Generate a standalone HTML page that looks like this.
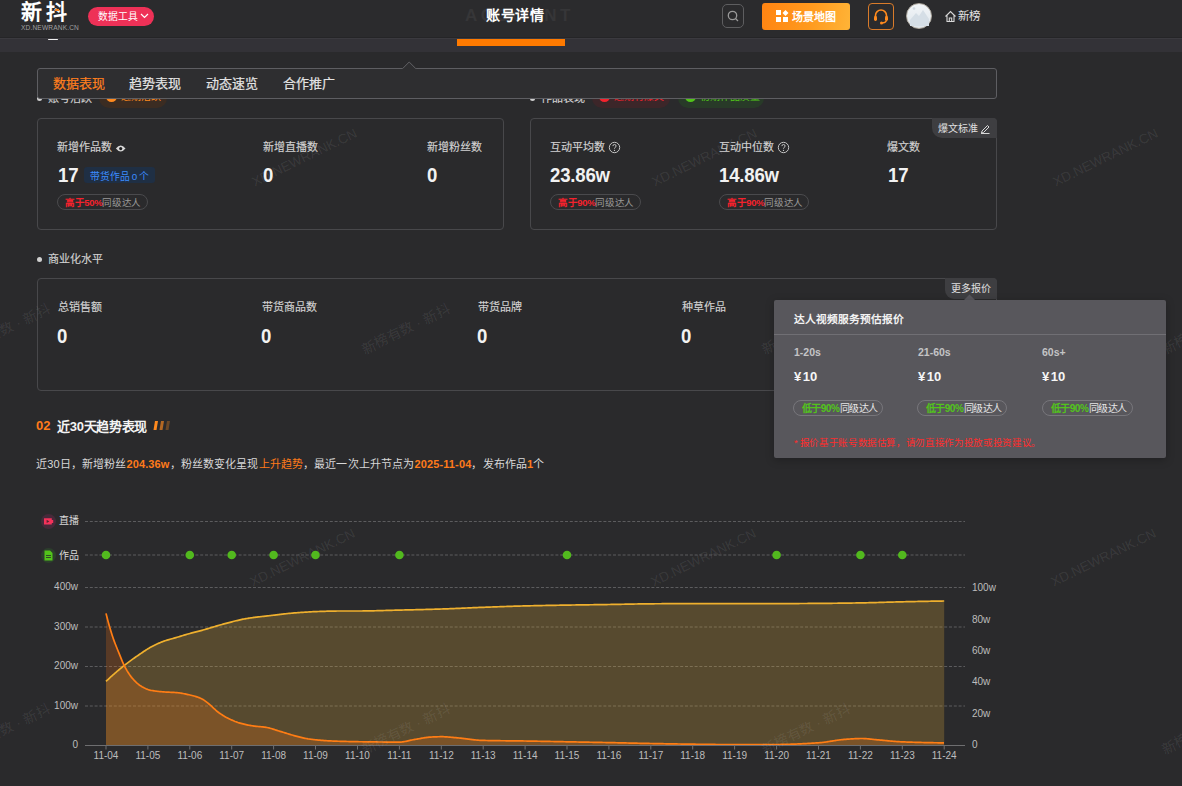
<!DOCTYPE html>
<html lang="zh-CN"><head><meta charset="utf-8">
<style>
*{margin:0;padding:0;box-sizing:border-box}
html,body{width:1182px;height:786px;overflow:hidden;background:#2a2a2c;font-family:"Liberation Sans",sans-serif;color:#d9d9d9}
.a{position:absolute;white-space:nowrap}
.ax{font-family:"Liberation Sans",sans-serif;font-size:10px;fill:#bdbdbd}
.hdr{position:absolute;left:0;top:0;width:1182px;height:38px;background:#2b2b2d;border-bottom:1px solid #252527}
.band{position:absolute;left:0;top:38px;width:1182px;height:14px;background:#333237;border-top:1px solid #3b3a3f}
.card{position:absolute;border:1px solid #48484b;border-radius:4px}
.lbl{font-size:11px;line-height:12px;color:#d2d2d2;-webkit-text-stroke:0.15px #d2d2d2}
.val{font-size:20px;line-height:20px;letter-spacing:-0.2px;transform:scaleX(0.93);transform-origin:0 0;font-weight:bold;color:#f2f2f2}
.pill{position:absolute;height:16px;border:1px solid #4a4a4d;border-radius:8px;font-size:9.5px;line-height:16px;padding-left:7px;letter-spacing:-0.35px;color:#9a9a9a;white-space:nowrap}
.pill b{color:#f5222d;font-weight:bold}
.wm{position:absolute;font-size:14px;color:rgba(255,255,255,0.085);transform:rotate(-26deg);white-space:nowrap;transform-origin:center}
.pp{position:absolute;height:16px;border:1px solid #77767b;border-radius:8px;font-size:10px;line-height:16px;padding-left:7.5px;letter-spacing:-0.4px;color:#e6e6e6;white-space:nowrap}
.pp b{color:#52c41a;font-weight:bold}
</style></head><body>

<!-- header -->
<div class="hdr"></div>
<div class="band"></div>
<div class="a" style="left:48px;top:38.7px;width:10px;height:1.6px;border-radius:1px;background:#f0f0f0"></div>
<div class="a" style="left:21px;top:0.5px;font-size:21px;line-height:22px;font-weight:bold;color:#fff;letter-spacing:4px">新抖</div>
<div class="a" style="left:55px;top:9px;width:4px;height:2px;background:#ff8a1e"></div>
<div class="a" style="left:21px;top:24px;font-size:6.6px;line-height:8px;color:#a0a0a0;letter-spacing:0.15px">XD.NEWRANK.CN</div>
<div class="a" style="left:88px;top:7px;width:66px;height:19px;border-radius:10px;background:#ee3157"></div>
<div class="a" style="left:98px;top:10px;font-size:9.8px;line-height:13px;color:#fff">数据工具</div>
<svg class="a" style="left:140px;top:12px" width="9" height="8"><path d="M1 2 L4.5 5.5 L8 2" stroke="#fff" stroke-width="1.2" fill="none"/></svg>

<div class="a" style="left:465px;top:6px;font-size:17px;line-height:20px;font-weight:bold;color:#363638;letter-spacing:3.4px">ACCOUNT</div>
<div class="a" style="left:486px;top:5.7px;font-size:14px;letter-spacing:0.7px;line-height:18px;font-weight:bold;color:#fff">账号详情</div>
<div class="a" style="left:457px;top:38.5px;width:108px;height:7px;background:#ff7a00"></div>

<div class="a" style="left:722px;top:4px;width:22px;height:24px;border:1px solid #5e5e60;border-radius:5px"></div>
<svg class="a" style="left:727px;top:10px" width="13" height="13"><circle cx="5.5" cy="5.5" r="4.2" stroke="#9a9a9a" stroke-width="1.3" fill="none"/><path d="M8.5 8.5 L11 11" stroke="#9a9a9a" stroke-width="1.3"/></svg>
<div class="a" style="left:762px;top:3px;width:88px;height:27px;border-radius:3px;background:linear-gradient(100deg,#ff8412 0%,#ff9a1e 55%,#ffb437 100%)"></div>
<svg class="a" style="left:776px;top:10px" width="13" height="12"><rect x="0" y="0" width="5" height="5" fill="#fff"/><rect x="0" y="7" width="5" height="5" fill="#fff"/><rect x="7" y="7" width="5" height="5" fill="#fff"/><path d="M9.5 0 L12.5 3 L9.5 6 L6.5 3 Z" fill="#fff"/></svg>
<div class="a" style="left:792px;top:10px;font-size:11px;line-height:14px;font-weight:bold;color:#fff">场景地图</div>
<div class="a" style="left:868px;top:3px;width:26px;height:27px;border:1px solid #d97b2a;border-radius:4px"></div>
<svg class="a" style="left:872px;top:8px" width="18" height="17"><path d="M3.5 9 V7.5 A5.5 5.5 0 0 1 14.5 7.5 V9" stroke="#ff8a1e" stroke-width="1.6" fill="none"/><rect x="2" y="8" width="3" height="5" rx="1.4" fill="#ff8a1e"/><rect x="13" y="8" width="3" height="5" rx="1.4" fill="#ff8a1e"/><path d="M14.5 12.5 Q13.5 15 10 15" stroke="#ff8a1e" stroke-width="1.4" fill="none"/><circle cx="9.5" cy="15" r="1.5" fill="#ff8a1e"/></svg>
<div class="a" style="left:906px;top:3px;width:26px;height:26px;border-radius:50%;background:linear-gradient(180deg,#f2f5f8 0%,#dfe6ec 100%);border:1px solid #b4aea4;overflow:hidden"></div>
<svg class="a" style="left:907px;top:4px" width="24" height="24"><circle cx="7" cy="4.5" r="1.3" fill="#d0d8e0"/><path d="M3 16 L9 9 L12 12 L16 6 L22 15 L22 22 L3 22 Z" fill="#d5dee6"/></svg>
<svg class="a" style="left:944px;top:10px" width="13" height="13"><path d="M1.5 6.5 L6.5 1.5 L11.5 6.5 M3 5 V11.5 H10 V5 M5.3 11.5 V8 H7.7 V11.5" stroke="#d8d8d8" stroke-width="1.1" fill="none"/></svg>
<div class="a" style="left:958px;top:9px;font-size:11.5px;line-height:14px;color:#e2e2e2">新榜</div>

<!-- watermarks -->
<div class="wm" style="left:247px;top:150px;font-size:13.5px">XD.NEWRANK.CN</div>
<div class="wm" style="left:647px;top:150px;font-size:13.5px">XD.NEWRANK.CN</div>
<div class="wm" style="left:1048px;top:150px;font-size:13.5px">XD.NEWRANK.CN</div>

<!-- section labels (partially under nav) -->
<div class="a" style="left:37px;top:96px;width:5px;height:5px;border-radius:50%;background:#cfcfcf"></div>
<div class="a lbl" style="left:48px;top:92px">账号活跃</div>
<div class="a" style="left:99px;top:88px;width:68px;height:20px;border-radius:10px;background:#3b2c22"></div>
<div class="a" style="left:106px;top:91px;width:11px;height:11px;border-radius:50%;background:#ff8a1e"></div>
<div class="a" style="left:121px;top:91px;font-size:10px;line-height:12px;color:#ff8a1e">近期活跃</div>

<div class="a" style="left:530px;top:96px;width:5px;height:5px;border-radius:50%;background:#cfcfcf"></div>
<div class="a lbl" style="left:541px;top:92px">作品表现</div>
<div class="a" style="left:592px;top:88px;width:78px;height:20px;border-radius:10px;background:#3c2629"></div>
<div class="a" style="left:599px;top:91px;width:11px;height:11px;border-radius:50%;background:#f5222d"></div>
<div class="a" style="left:614px;top:91px;font-size:10px;line-height:12px;color:#f5222d">近期有爆文</div>
<div class="a" style="left:678px;top:88px;width:86px;height:20px;border-radius:10px;background:#283a28"></div>
<div class="a" style="left:685px;top:91px;width:11px;height:11px;border-radius:50%;background:#52c41a"></div>
<div class="a" style="left:700px;top:91px;font-size:10px;line-height:12px;color:#52c41a">初期作品质量</div>

<!-- nav -->
<div class="a" style="left:37px;top:68px;width:960px;height:31px;background:#2e2e30;border:1px solid #5e5e62;border-radius:3px"></div>
<svg class="a" style="left:401.5px;top:61px" width="15" height="9"><path d="M0 8 L7.2 0.8 L14.4 8 Z" fill="#2e2e30"/><path d="M0.6 7.6 L7.2 1 L13.8 7.6" stroke="#626266" stroke-width="1" fill="none"/></svg>
<div class="a" style="left:53px;top:76px;font-size:13px;line-height:16px;color:#ff7f1e;-webkit-text-stroke:0.2px #ff7f1e">数据表现</div>
<div class="a" style="left:129px;top:76px;font-size:13px;line-height:16px;color:#e4e4e4;-webkit-text-stroke:0.2px #e4e4e4">趋势表现</div>
<div class="a" style="left:206px;top:76px;font-size:13px;line-height:16px;color:#e4e4e4;-webkit-text-stroke:0.2px #e4e4e4">动态速览</div>
<div class="a" style="left:283px;top:76px;font-size:13px;line-height:16px;color:#e4e4e4;-webkit-text-stroke:0.2px #e4e4e4">合作推广</div>

<!-- card 1 -->
<div class="card" style="left:37px;top:118px;width:467px;height:112px"></div>
<div class="a lbl" style="left:57px;top:141px">新增作品数</div>
<svg class="a" style="left:115px;top:144px" width="12" height="9"><path d="M0.9 4.6 Q5.7 -1.4 10.5 4.6 Q5.7 10.6 0.9 4.6 Z" fill="#d8d8d8"/><circle cx="5.7" cy="4.6" r="1.6" fill="#1e1e20"/></svg>
<div class="a val" style="left:58px;top:165px">17</div>
<div class="a" style="left:84px;top:167px;width:71px;height:16px;border-radius:3px;background:#1f2f44"></div>
<div class="a" style="left:90px;top:170.5px;font-size:9.8px;line-height:12px;color:#3c8cff;word-spacing:-1px">带货作品 0 个</div>
<div class="pill" style="left:57px;top:194px;width:91px"><b>高于50%</b>同级达人</div>
<div class="a lbl" style="left:263px;top:141px">新增直播数</div>
<div class="a val" style="left:263px;top:165px">0</div>
<div class="a lbl" style="left:427px;top:141px">新增粉丝数</div>
<div class="a val" style="left:427px;top:165px">0</div>

<!-- card 2 -->
<div class="card" style="left:530px;top:118px;width:467px;height:112px"></div>
<div class="a" style="left:932px;top:118px;width:65px;height:20px;background:#3e3e41;border-radius:0 4px 0 10px"></div>
<div class="a" style="left:938px;top:122px;font-size:10px;line-height:13px;color:#e0e0e0">爆文标准</div>
<svg class="a" style="left:980px;top:123px" width="10" height="11"><path d="M2 8 L7.5 2.5 L9 4 L3.5 9.5 L1.5 10 Z" stroke="#d8d8d8" stroke-width="1" fill="none"/><path d="M1 10.5 H9.5" stroke="#d8d8d8" stroke-width="1"/></svg>
<div class="a lbl" style="left:550px;top:141px">互动平均数</div>
<svg class="a" style="left:608px;top:141px" width="13" height="13"><circle cx="6.5" cy="6.5" r="5.2" stroke="#c4c4c4" stroke-width="1" fill="none"/><path d="M4.9 5.1 Q4.9 3.5 6.5 3.5 Q8.1 3.5 8.1 5 Q8.1 5.9 7 6.5 Q6.5 6.8 6.5 7.7" stroke="#c4c4c4" stroke-width="1" fill="none"/><circle cx="6.5" cy="9.4" r="0.65" fill="#c4c4c4"/></svg>
<div class="a val" style="left:550px;top:165px">23.86w</div>
<div class="pill" style="left:550px;top:194px;width:91px"><b>高于90%</b>同级达人</div>
<div class="a lbl" style="left:719px;top:141px">互动中位数</div>
<svg class="a" style="left:777px;top:141px" width="13" height="13"><circle cx="6.5" cy="6.5" r="5.2" stroke="#c4c4c4" stroke-width="1" fill="none"/><path d="M4.9 5.1 Q4.9 3.5 6.5 3.5 Q8.1 3.5 8.1 5 Q8.1 5.9 7 6.5 Q6.5 6.8 6.5 7.7" stroke="#c4c4c4" stroke-width="1" fill="none"/><circle cx="6.5" cy="9.4" r="0.65" fill="#c4c4c4"/></svg>
<div class="a val" style="left:719px;top:165px">14.86w</div>
<div class="pill" style="left:719px;top:194px;width:90px"><b>高于90%</b>同级达人</div>
<div class="a lbl" style="left:887px;top:141px">爆文数</div>
<div class="a val" style="left:888px;top:165px">17</div>

<!-- section 商业化 -->
<div class="a" style="left:37px;top:256.5px;width:5px;height:5px;border-radius:50%;background:#d0d0d0"></div>
<div class="a lbl" style="left:48px;top:253px">商业化水平</div>
<div class="card" style="left:37px;top:278px;width:960px;height:113px"></div>
<div class="a" style="left:945px;top:278px;width:52px;height:21px;background:#3e3e41;border-radius:0 4px 0 9px"></div>
<div class="a" style="left:951px;top:283px;font-size:10px;line-height:12px;color:#e0e0e0">更多报价</div>
<div class="a lbl" style="left:58px;top:301px">总销售额</div>
<div class="a val" style="left:57px;top:326px">0</div>
<div class="a lbl" style="left:262px;top:301px">带货商品数</div>
<div class="a val" style="left:261px;top:326px">0</div>
<div class="a lbl" style="left:478px;top:301px">带货品牌</div>
<div class="a val" style="left:477px;top:326px">0</div>
<div class="a lbl" style="left:682px;top:301px">种草作品</div>
<div class="a val" style="left:681px;top:326px">0</div>

<div class="wm" style="left:357px;top:318px">新榜有数 · 新抖</div>
<div class="wm" style="left:-43px;top:318px">新榜有数 · 新抖</div>
<div class="wm" style="left:757px;top:318px">新榜有数 · 新抖</div>
<div class="wm" style="left:1157px;top:318px">新榜有数 · 新抖</div>

<!-- section 02 -->
<div class="a" style="left:36px;top:418px;font-size:13px;line-height:16px;font-weight:bold;color:#ff7a1a">02</div>
<div class="a" style="left:57px;top:418.5px;font-size:13px;letter-spacing:-0.3px;line-height:16px;font-weight:bold;color:#f4f4f4">近30天趋势表现</div>
<svg class="a" style="left:153px;top:420px" width="19" height="11"><path d="M2 1 H5 L3.5 10 H0.5 Z" fill="#ff8a1e"/><path d="M8 1 H11 L9.5 10 H6.5 Z" fill="#ff8a1e" opacity="0.65"/><path d="M14 1 H17 L15.5 10 H12.5 Z" fill="#ff8a1e" opacity="0.3"/></svg>
<div class="a" style="left:36px;top:457px;font-size:11px;letter-spacing:0.13px;line-height:14px;color:#d8d8d8">近30日，新增粉丝<span style="color:#ff7a1a;font-weight:bold">204.36w</span>，粉丝数变化呈现<span style="color:#ff7a1a">上升趋势</span>，最近一次上升节点为<span style="color:#ff7a1a;font-weight:bold">2025-11-04</span>，发布作品<span style="color:#ff7a1a;font-weight:bold">1</span>个</div>

<!-- chart legend -->
<div class="a" style="left:41px;top:514px;width:15px;height:15px;border-radius:50%;background:#47293a"></div>
<svg class="a" style="left:44px;top:517.5px" width="10" height="8"><path d="M0 0.3 H7.8 V2 H9.2 V5 H7.8 V6.6 H0 Z" fill="#f5325a"/><path d="M2.6 1.8 L5.4 3.45 L2.6 5.1 Z" fill="#5a2030"/></svg>
<div class="a" style="left:59px;top:514.5px;font-size:10px;line-height:12px;color:#d8d8d8">直播</div>
<div class="a" style="left:41px;top:548px;width:15px;height:15px;border-radius:50%;background:#2c3f2c"></div>
<svg class="a" style="left:44px;top:550px" width="9" height="11"><path d="M0.5 0.5 H6 L8.5 3 V10.5 H0.5 Z" fill="#52c41a"/><path d="M2 5.5 H7 M2 7.5 H7" stroke="#2c3c2a" stroke-width="0.9"/></svg>
<div class="a" style="left:59px;top:549.5px;font-size:10px;line-height:12px;color:#d8d8d8">作品</div>

<div class="wm" style="left:245px;top:550px;font-size:13.5px">XD.NEWRANK.CN</div>
<div class="wm" style="left:646px;top:550px;font-size:13.5px">XD.NEWRANK.CN</div>
<div class="wm" style="left:1046px;top:550px;font-size:13.5px">XD.NEWRANK.CN</div>

<svg width="1182" height="786" style="position:absolute;left:0;top:0">
<line x1="85" y1="521.5" x2="965" y2="521.5" stroke="#5c5c5e" stroke-width="1" stroke-dasharray="3 1.8"/>
<line x1="85" y1="555.0" x2="965" y2="555.0" stroke="#5c5c5e" stroke-width="1" stroke-dasharray="3 1.8"/>
<line x1="85" y1="587.5" x2="965" y2="587.5" stroke="#5c5c5e" stroke-width="1" stroke-dasharray="3 1.8"/>
<line x1="85" y1="627.0" x2="965" y2="627.0" stroke="#5c5c5e" stroke-width="1" stroke-dasharray="3 1.8"/>
<line x1="85" y1="666.5" x2="965" y2="666.5" stroke="#5c5c5e" stroke-width="1" stroke-dasharray="3 1.8"/>
<line x1="85" y1="706.0" x2="965" y2="706.0" stroke="#5c5c5e" stroke-width="1" stroke-dasharray="3 1.8"/>
<path d="M106.0 681.40 L107.0 680.45 L108.0 679.51 L109.0 678.57 L110.0 677.65 L111.0 676.73 L112.0 675.83 L113.0 674.93 L114.0 674.04 L115.0 673.16 L116.0 672.29 L117.0 671.43 L118.0 670.58 L119.0 669.74 L120.0 668.90 L121.0 668.08 L122.0 667.26 L123.0 666.46 L124.0 665.66 L125.0 664.87 L126.0 664.09 L127.0 663.33 L128.0 662.57 L129.0 661.82 L130.0 661.09 L131.0 660.36 L132.0 659.64 L133.0 658.92 L134.0 658.21 L135.0 657.51 L136.0 656.81 L137.0 656.12 L138.0 655.44 L139.0 654.75 L140.0 654.06 L141.0 653.37 L142.0 652.69 L143.0 652.00 L144.0 651.33 L145.0 650.67 L146.0 650.01 L147.0 649.38 L148.0 648.76 L149.0 648.17 L150.0 647.59 L151.0 647.05 L152.0 646.52 L153.0 646.00 L154.0 645.49 L155.0 645.00 L156.0 644.51 L157.0 644.04 L158.0 643.58 L159.0 643.14 L160.0 642.71 L161.0 642.30 L162.0 641.90 L163.0 641.52 L164.0 641.16 L165.0 640.81 L166.0 640.48 L167.0 640.17 L168.0 639.87 L169.0 639.57 L170.0 639.28 L171.0 639.00 L172.0 638.72 L173.0 638.45 L174.0 638.17 L175.0 637.88 L176.0 637.59 L177.0 637.29 L178.0 636.99 L179.0 636.69 L180.0 636.38 L181.0 636.08 L182.0 635.78 L183.0 635.48 L184.0 635.18 L185.0 634.88 L186.0 634.58 L187.0 634.29 L188.0 634.01 L189.0 633.73 L190.0 633.45 L191.0 633.19 L192.0 632.92 L193.0 632.67 L194.0 632.41 L195.0 632.16 L196.0 631.90 L197.0 631.65 L198.0 631.39 L199.0 631.13 L200.0 630.87 L201.0 630.60 L202.0 630.32 L203.0 630.04 L204.0 629.76 L205.0 629.47 L206.0 629.17 L207.0 628.88 L208.0 628.58 L209.0 628.28 L210.0 627.98 L211.0 627.67 L212.0 627.37 L213.0 627.07 L214.0 626.77 L215.0 626.47 L216.0 626.17 L217.0 625.87 L218.0 625.58 L219.0 625.29 L220.0 625.01 L221.0 624.73 L222.0 624.45 L223.0 624.18 L224.0 623.92 L225.0 623.66 L226.0 623.40 L227.0 623.13 L228.0 622.87 L229.0 622.60 L230.0 622.34 L231.0 622.07 L232.0 621.81 L233.0 621.55 L234.0 621.30 L235.0 621.04 L236.0 620.79 L237.0 620.55 L238.0 620.31 L239.0 620.07 L240.0 619.85 L241.0 619.63 L242.0 619.41 L243.0 619.20 L244.0 619.01 L245.0 618.82 L246.0 618.64 L247.0 618.47 L248.0 618.30 L249.0 618.15 L250.0 618.00 L251.0 617.86 L252.0 617.72 L253.0 617.58 L254.0 617.45 L255.0 617.32 L256.0 617.20 L257.0 617.08 L258.0 616.96 L259.0 616.84 L260.0 616.73 L261.0 616.62 L262.0 616.51 L263.0 616.40 L264.0 616.29 L265.0 616.18 L266.0 616.07 L267.0 615.96 L268.0 615.85 L269.0 615.74 L270.0 615.63 L271.0 615.51 L272.0 615.40 L273.0 615.28 L274.0 615.16 L275.0 615.04 L276.0 614.92 L277.0 614.80 L278.0 614.68 L279.0 614.55 L280.0 614.43 L281.0 614.31 L282.0 614.20 L283.0 614.08 L284.0 613.96 L285.0 613.85 L286.0 613.74 L287.0 613.63 L288.0 613.52 L289.0 613.42 L290.0 613.32 L291.0 613.23 L292.0 613.13 L293.0 613.05 L294.0 612.96 L295.0 612.88 L296.0 612.81 L297.0 612.73 L298.0 612.66 L299.0 612.59 L300.0 612.51 L301.0 612.44 L302.0 612.37 L303.0 612.31 L304.0 612.24 L305.0 612.17 L306.0 612.11 L307.0 612.05 L308.0 611.99 L309.0 611.93 L310.0 611.88 L311.0 611.82 L312.0 611.77 L313.0 611.72 L314.0 611.68 L315.0 611.63 L316.0 611.59 L317.0 611.55 L318.0 611.52 L319.0 611.48 L320.0 611.45 L321.0 611.42 L322.0 611.38 L323.0 611.35 L324.0 611.32 L325.0 611.29 L326.0 611.25 L327.0 611.22 L328.0 611.20 L329.0 611.17 L330.0 611.14 L331.0 611.12 L332.0 611.09 L333.0 611.07 L334.0 611.06 L335.0 611.04 L336.0 611.03 L337.0 611.01 L338.0 611.01 L339.0 611.00 L340.0 611.00 L341.0 611.00 L342.0 611.00 L343.0 611.00 L344.0 611.00 L345.0 611.00 L346.0 611.00 L347.0 611.00 L348.0 611.00 L349.0 611.00 L350.0 611.00 L351.0 611.00 L352.0 611.00 L353.0 611.00 L354.0 611.00 L355.0 611.00 L356.0 611.00 L357.0 611.00 L358.0 611.00 L359.0 611.00 L360.0 610.99 L361.0 610.99 L362.0 610.98 L363.0 610.97 L364.0 610.96 L365.0 610.95 L366.0 610.93 L367.0 610.92 L368.0 610.90 L369.0 610.89 L370.0 610.87 L371.0 610.85 L372.0 610.83 L373.0 610.81 L374.0 610.78 L375.0 610.76 L376.0 610.73 L377.0 610.71 L378.0 610.68 L379.0 610.66 L380.0 610.63 L381.0 610.60 L382.0 610.58 L383.0 610.55 L384.0 610.52 L385.0 610.49 L386.0 610.46 L387.0 610.44 L388.0 610.41 L389.0 610.38 L390.0 610.35 L391.0 610.32 L392.0 610.29 L393.0 610.27 L394.0 610.24 L395.0 610.21 L396.0 610.19 L397.0 610.16 L398.0 610.14 L399.0 610.11 L400.0 610.09 L401.0 610.06 L402.0 610.04 L403.0 610.02 L404.0 609.99 L405.0 609.97 L406.0 609.95 L407.0 609.92 L408.0 609.90 L409.0 609.88 L410.0 609.85 L411.0 609.83 L412.0 609.80 L413.0 609.78 L414.0 609.76 L415.0 609.73 L416.0 609.71 L417.0 609.68 L418.0 609.66 L419.0 609.63 L420.0 609.61 L421.0 609.58 L422.0 609.56 L423.0 609.53 L424.0 609.51 L425.0 609.48 L426.0 609.45 L427.0 609.43 L428.0 609.40 L429.0 609.37 L430.0 609.34 L431.0 609.32 L432.0 609.29 L433.0 609.26 L434.0 609.23 L435.0 609.20 L436.0 609.17 L437.0 609.14 L438.0 609.11 L439.0 609.08 L440.0 609.05 L441.0 609.02 L442.0 608.99 L443.0 608.95 L444.0 608.92 L445.0 608.89 L446.0 608.85 L447.0 608.81 L448.0 608.78 L449.0 608.74 L450.0 608.70 L451.0 608.66 L452.0 608.62 L453.0 608.58 L454.0 608.54 L455.0 608.50 L456.0 608.46 L457.0 608.41 L458.0 608.37 L459.0 608.33 L460.0 608.28 L461.0 608.24 L462.0 608.20 L463.0 608.15 L464.0 608.11 L465.0 608.06 L466.0 608.02 L467.0 607.98 L468.0 607.93 L469.0 607.89 L470.0 607.85 L471.0 607.80 L472.0 607.76 L473.0 607.72 L474.0 607.67 L475.0 607.63 L476.0 607.59 L477.0 607.55 L478.0 607.51 L479.0 607.47 L480.0 607.43 L481.0 607.39 L482.0 607.35 L483.0 607.31 L484.0 607.28 L485.0 607.24 L486.0 607.20 L487.0 607.17 L488.0 607.13 L489.0 607.09 L490.0 607.06 L491.0 607.02 L492.0 606.98 L493.0 606.95 L494.0 606.91 L495.0 606.87 L496.0 606.84 L497.0 606.80 L498.0 606.76 L499.0 606.73 L500.0 606.69 L501.0 606.66 L502.0 606.62 L503.0 606.59 L504.0 606.55 L505.0 606.52 L506.0 606.48 L507.0 606.45 L508.0 606.41 L509.0 606.38 L510.0 606.35 L511.0 606.32 L512.0 606.28 L513.0 606.25 L514.0 606.22 L515.0 606.19 L516.0 606.16 L517.0 606.13 L518.0 606.10 L519.0 606.07 L520.0 606.04 L521.0 606.02 L522.0 605.99 L523.0 605.96 L524.0 605.94 L525.0 605.91 L526.0 605.89 L527.0 605.86 L528.0 605.84 L529.0 605.82 L530.0 605.79 L531.0 605.77 L532.0 605.75 L533.0 605.73 L534.0 605.70 L535.0 605.68 L536.0 605.66 L537.0 605.64 L538.0 605.62 L539.0 605.60 L540.0 605.58 L541.0 605.56 L542.0 605.54 L543.0 605.52 L544.0 605.50 L545.0 605.48 L546.0 605.46 L547.0 605.44 L548.0 605.43 L549.0 605.41 L550.0 605.39 L551.0 605.37 L552.0 605.35 L553.0 605.34 L554.0 605.32 L555.0 605.30 L556.0 605.28 L557.0 605.27 L558.0 605.25 L559.0 605.23 L560.0 605.22 L561.0 605.20 L562.0 605.18 L563.0 605.17 L564.0 605.15 L565.0 605.13 L566.0 605.12 L567.0 605.10 L568.0 605.08 L569.0 605.07 L570.0 605.05 L571.0 605.04 L572.0 605.02 L573.0 605.01 L574.0 604.99 L575.0 604.98 L576.0 604.96 L577.0 604.95 L578.0 604.93 L579.0 604.92 L580.0 604.90 L581.0 604.89 L582.0 604.88 L583.0 604.86 L584.0 604.85 L585.0 604.84 L586.0 604.82 L587.0 604.81 L588.0 604.79 L589.0 604.78 L590.0 604.77 L591.0 604.75 L592.0 604.74 L593.0 604.73 L594.0 604.71 L595.0 604.70 L596.0 604.69 L597.0 604.67 L598.0 604.66 L599.0 604.65 L600.0 604.63 L601.0 604.62 L602.0 604.60 L603.0 604.59 L604.0 604.57 L605.0 604.56 L606.0 604.55 L607.0 604.53 L608.0 604.52 L609.0 604.50 L610.0 604.48 L611.0 604.47 L612.0 604.45 L613.0 604.43 L614.0 604.42 L615.0 604.40 L616.0 604.38 L617.0 604.36 L618.0 604.34 L619.0 604.32 L620.0 604.30 L621.0 604.29 L622.0 604.27 L623.0 604.25 L624.0 604.23 L625.0 604.21 L626.0 604.19 L627.0 604.17 L628.0 604.15 L629.0 604.13 L630.0 604.11 L631.0 604.09 L632.0 604.07 L633.0 604.05 L634.0 604.03 L635.0 604.01 L636.0 604.00 L637.0 603.98 L638.0 603.96 L639.0 603.95 L640.0 603.93 L641.0 603.92 L642.0 603.90 L643.0 603.89 L644.0 603.87 L645.0 603.86 L646.0 603.85 L647.0 603.84 L648.0 603.83 L649.0 603.82 L650.0 603.81 L651.0 603.80 L652.0 603.79 L653.0 603.79 L654.0 603.78 L655.0 603.77 L656.0 603.76 L657.0 603.76 L658.0 603.75 L659.0 603.74 L660.0 603.74 L661.0 603.73 L662.0 603.72 L663.0 603.71 L664.0 603.71 L665.0 603.70 L666.0 603.70 L667.0 603.69 L668.0 603.68 L669.0 603.68 L670.0 603.67 L671.0 603.67 L672.0 603.66 L673.0 603.66 L674.0 603.65 L675.0 603.65 L676.0 603.64 L677.0 603.64 L678.0 603.63 L679.0 603.63 L680.0 603.63 L681.0 603.62 L682.0 603.62 L683.0 603.62 L684.0 603.61 L685.0 603.61 L686.0 603.61 L687.0 603.61 L688.0 603.60 L689.0 603.60 L690.0 603.60 L691.0 603.60 L692.0 603.60 L693.0 603.60 L694.0 603.60 L695.0 603.60 L696.0 603.60 L697.0 603.60 L698.0 603.60 L699.0 603.60 L700.0 603.60 L701.0 603.60 L702.0 603.60 L703.0 603.60 L704.0 603.60 L705.0 603.60 L706.0 603.60 L707.0 603.60 L708.0 603.60 L709.0 603.60 L710.0 603.60 L711.0 603.60 L712.0 603.60 L713.0 603.60 L714.0 603.60 L715.0 603.60 L716.0 603.60 L717.0 603.60 L718.0 603.60 L719.0 603.60 L720.0 603.60 L721.0 603.60 L722.0 603.60 L723.0 603.60 L724.0 603.60 L725.0 603.60 L726.0 603.60 L727.0 603.60 L728.0 603.60 L729.0 603.60 L730.0 603.60 L731.0 603.60 L732.0 603.60 L733.0 603.60 L734.0 603.60 L735.0 603.60 L736.0 603.60 L737.0 603.60 L738.0 603.60 L739.0 603.60 L740.0 603.60 L741.0 603.60 L742.0 603.60 L743.0 603.60 L744.0 603.60 L745.0 603.60 L746.0 603.60 L747.0 603.60 L748.0 603.60 L749.0 603.60 L750.0 603.60 L751.0 603.60 L752.0 603.60 L753.0 603.60 L754.0 603.60 L755.0 603.60 L756.0 603.60 L757.0 603.60 L758.0 603.60 L759.0 603.60 L760.0 603.60 L761.0 603.60 L762.0 603.60 L763.0 603.60 L764.0 603.60 L765.0 603.60 L766.0 603.60 L767.0 603.60 L768.0 603.60 L769.0 603.60 L770.0 603.60 L771.0 603.60 L772.0 603.60 L773.0 603.60 L774.0 603.60 L775.0 603.60 L776.0 603.60 L777.0 603.60 L778.0 603.60 L779.0 603.60 L780.0 603.60 L781.0 603.60 L782.0 603.60 L783.0 603.59 L784.0 603.59 L785.0 603.59 L786.0 603.59 L787.0 603.58 L788.0 603.58 L789.0 603.58 L790.0 603.57 L791.0 603.57 L792.0 603.56 L793.0 603.56 L794.0 603.55 L795.0 603.55 L796.0 603.54 L797.0 603.54 L798.0 603.53 L799.0 603.53 L800.0 603.52 L801.0 603.52 L802.0 603.51 L803.0 603.50 L804.0 603.50 L805.0 603.49 L806.0 603.48 L807.0 603.48 L808.0 603.47 L809.0 603.46 L810.0 603.46 L811.0 603.45 L812.0 603.44 L813.0 603.44 L814.0 603.43 L815.0 603.42 L816.0 603.42 L817.0 603.41 L818.0 603.40 L819.0 603.39 L820.0 603.39 L821.0 603.38 L822.0 603.37 L823.0 603.36 L824.0 603.36 L825.0 603.35 L826.0 603.34 L827.0 603.33 L828.0 603.32 L829.0 603.31 L830.0 603.30 L831.0 603.29 L832.0 603.28 L833.0 603.27 L834.0 603.26 L835.0 603.25 L836.0 603.24 L837.0 603.23 L838.0 603.22 L839.0 603.20 L840.0 603.19 L841.0 603.18 L842.0 603.17 L843.0 603.15 L844.0 603.14 L845.0 603.13 L846.0 603.11 L847.0 603.10 L848.0 603.09 L849.0 603.07 L850.0 603.06 L851.0 603.04 L852.0 603.03 L853.0 603.02 L854.0 603.00 L855.0 602.99 L856.0 602.97 L857.0 602.95 L858.0 602.94 L859.0 602.92 L860.0 602.91 L861.0 602.89 L862.0 602.87 L863.0 602.85 L864.0 602.83 L865.0 602.81 L866.0 602.79 L867.0 602.77 L868.0 602.75 L869.0 602.72 L870.0 602.70 L871.0 602.67 L872.0 602.65 L873.0 602.62 L874.0 602.59 L875.0 602.56 L876.0 602.54 L877.0 602.51 L878.0 602.48 L879.0 602.45 L880.0 602.42 L881.0 602.39 L882.0 602.36 L883.0 602.33 L884.0 602.30 L885.0 602.27 L886.0 602.24 L887.0 602.21 L888.0 602.18 L889.0 602.15 L890.0 602.12 L891.0 602.09 L892.0 602.07 L893.0 602.04 L894.0 602.01 L895.0 601.98 L896.0 601.95 L897.0 601.93 L898.0 601.90 L899.0 601.88 L900.0 601.85 L901.0 601.83 L902.0 601.81 L903.0 601.78 L904.0 601.76 L905.0 601.74 L906.0 601.72 L907.0 601.70 L908.0 601.68 L909.0 601.65 L910.0 601.63 L911.0 601.61 L912.0 601.59 L913.0 601.57 L914.0 601.55 L915.0 601.53 L916.0 601.51 L917.0 601.49 L918.0 601.47 L919.0 601.45 L920.0 601.43 L921.0 601.41 L922.0 601.39 L923.0 601.37 L924.0 601.35 L925.0 601.33 L926.0 601.31 L927.0 601.29 L928.0 601.28 L929.0 601.26 L930.0 601.24 L931.0 601.22 L932.0 601.20 L933.0 601.19 L934.0 601.17 L935.0 601.15 L936.0 601.13 L937.0 601.12 L938.0 601.10 L939.0 601.08 L940.0 601.07 L941.0 601.05 L942.0 601.03 L943.0 601.02 L944.0 601.00 L944.2 601.00 L944.2 745 L106 745 Z" fill="rgba(225,172,55,0.25)"/>
<path d="M106.0 613.40 L107.0 617.32 L108.0 621.11 L109.0 624.76 L110.0 628.26 L111.0 631.60 L112.0 634.78 L113.0 637.78 L114.0 640.60 L115.0 643.26 L116.0 645.80 L117.0 648.27 L118.0 650.71 L119.0 653.15 L120.0 655.65 L121.0 658.18 L122.0 660.65 L123.0 662.98 L124.0 665.11 L125.0 667.02 L126.0 668.85 L127.0 670.60 L128.0 672.26 L129.0 673.82 L130.0 675.27 L131.0 676.61 L132.0 677.84 L133.0 678.99 L134.0 680.10 L135.0 681.16 L136.0 682.17 L137.0 683.10 L138.0 683.97 L139.0 684.76 L140.0 685.46 L141.0 686.08 L142.0 686.66 L143.0 687.21 L144.0 687.74 L145.0 688.23 L146.0 688.69 L147.0 689.11 L148.0 689.49 L149.0 689.82 L150.0 690.10 L151.0 690.32 L152.0 690.51 L153.0 690.69 L154.0 690.85 L155.0 691.00 L156.0 691.14 L157.0 691.26 L158.0 691.38 L159.0 691.49 L160.0 691.59 L161.0 691.68 L162.0 691.77 L163.0 691.85 L164.0 691.93 L165.0 692.00 L166.0 692.06 L167.0 692.11 L168.0 692.15 L169.0 692.20 L170.0 692.24 L171.0 692.28 L172.0 692.33 L173.0 692.38 L174.0 692.44 L175.0 692.50 L176.0 692.58 L177.0 692.66 L178.0 692.77 L179.0 692.89 L180.0 693.03 L181.0 693.19 L182.0 693.35 L183.0 693.53 L184.0 693.72 L185.0 693.92 L186.0 694.13 L187.0 694.34 L188.0 694.56 L189.0 694.78 L190.0 695.00 L191.0 695.23 L192.0 695.48 L193.0 695.73 L194.0 696.00 L195.0 696.28 L196.0 696.58 L197.0 696.91 L198.0 697.25 L199.0 697.61 L200.0 698.01 L201.0 698.42 L202.0 698.89 L203.0 699.45 L204.0 700.10 L205.0 700.83 L206.0 701.60 L207.0 702.39 L208.0 703.20 L209.0 704.00 L210.0 704.82 L211.0 705.70 L212.0 706.62 L213.0 707.56 L214.0 708.52 L215.0 709.46 L216.0 710.37 L217.0 711.24 L218.0 712.05 L219.0 712.79 L220.0 713.49 L221.0 714.17 L222.0 714.82 L223.0 715.46 L224.0 716.07 L225.0 716.65 L226.0 717.21 L227.0 717.74 L228.0 718.25 L229.0 718.74 L230.0 719.22 L231.0 719.69 L232.0 720.14 L233.0 720.58 L234.0 721.01 L235.0 721.42 L236.0 721.80 L237.0 722.17 L238.0 722.51 L239.0 722.82 L240.0 723.11 L241.0 723.39 L242.0 723.66 L243.0 723.92 L244.0 724.16 L245.0 724.40 L246.0 724.63 L247.0 724.84 L248.0 725.05 L249.0 725.24 L250.0 725.43 L251.0 725.60 L252.0 725.76 L253.0 725.91 L254.0 726.05 L255.0 726.18 L256.0 726.29 L257.0 726.39 L258.0 726.48 L259.0 726.57 L260.0 726.66 L261.0 726.76 L262.0 726.86 L263.0 726.96 L264.0 727.08 L265.0 727.21 L266.0 727.35 L267.0 727.52 L268.0 727.72 L269.0 727.95 L270.0 728.21 L271.0 728.49 L272.0 728.79 L273.0 729.10 L274.0 729.42 L275.0 729.74 L276.0 730.07 L277.0 730.39 L278.0 730.71 L279.0 731.02 L280.0 731.32 L281.0 731.62 L282.0 731.92 L283.0 732.23 L284.0 732.54 L285.0 732.86 L286.0 733.17 L287.0 733.48 L288.0 733.80 L289.0 734.10 L290.0 734.41 L291.0 734.71 L292.0 735.00 L293.0 735.29 L294.0 735.56 L295.0 735.83 L296.0 736.09 L297.0 736.36 L298.0 736.62 L299.0 736.89 L300.0 737.15 L301.0 737.41 L302.0 737.66 L303.0 737.89 L304.0 738.12 L305.0 738.33 L306.0 738.53 L307.0 738.70 L308.0 738.86 L309.0 738.99 L310.0 739.13 L311.0 739.25 L312.0 739.38 L313.0 739.50 L314.0 739.61 L315.0 739.73 L316.0 739.83 L317.0 739.94 L318.0 740.04 L319.0 740.13 L320.0 740.22 L321.0 740.31 L322.0 740.39 L323.0 740.47 L324.0 740.55 L325.0 740.62 L326.0 740.68 L327.0 740.74 L328.0 740.80 L329.0 740.85 L330.0 740.90 L331.0 740.95 L332.0 740.99 L333.0 741.03 L334.0 741.07 L335.0 741.11 L336.0 741.15 L337.0 741.19 L338.0 741.23 L339.0 741.26 L340.0 741.29 L341.0 741.33 L342.0 741.36 L343.0 741.39 L344.0 741.42 L345.0 741.45 L346.0 741.47 L347.0 741.50 L348.0 741.52 L349.0 741.55 L350.0 741.57 L351.0 741.59 L352.0 741.61 L353.0 741.63 L354.0 741.65 L355.0 741.67 L356.0 741.68 L357.0 741.70 L358.0 741.71 L359.0 741.73 L360.0 741.74 L361.0 741.76 L362.0 741.77 L363.0 741.79 L364.0 741.80 L365.0 741.82 L366.0 741.83 L367.0 741.84 L368.0 741.86 L369.0 741.87 L370.0 741.88 L371.0 741.90 L372.0 741.91 L373.0 741.92 L374.0 741.93 L375.0 741.94 L376.0 741.96 L377.0 741.97 L378.0 741.98 L379.0 741.99 L380.0 742.00 L381.0 742.01 L382.0 742.02 L383.0 742.02 L384.0 742.03 L385.0 742.04 L386.0 742.05 L387.0 742.06 L388.0 742.06 L389.0 742.07 L390.0 742.07 L391.0 742.08 L392.0 742.08 L393.0 742.09 L394.0 742.09 L395.0 742.09 L396.0 742.10 L397.0 742.10 L398.0 742.10 L399.0 742.10 L400.0 742.09 L401.0 742.04 L402.0 741.96 L403.0 741.83 L404.0 741.68 L405.0 741.51 L406.0 741.31 L407.0 741.10 L408.0 740.88 L409.0 740.65 L410.0 740.43 L411.0 740.20 L412.0 739.99 L413.0 739.78 L414.0 739.60 L415.0 739.44 L416.0 739.27 L417.0 739.10 L418.0 738.92 L419.0 738.74 L420.0 738.55 L421.0 738.37 L422.0 738.20 L423.0 738.02 L424.0 737.85 L425.0 737.70 L426.0 737.55 L427.0 737.41 L428.0 737.29 L429.0 737.18 L430.0 737.09 L431.0 737.03 L432.0 736.98 L433.0 736.93 L434.0 736.89 L435.0 736.85 L436.0 736.81 L437.0 736.78 L438.0 736.75 L439.0 736.73 L440.0 736.71 L441.0 736.70 L442.0 736.70 L443.0 736.71 L444.0 736.74 L445.0 736.78 L446.0 736.84 L447.0 736.90 L448.0 736.98 L449.0 737.06 L450.0 737.15 L451.0 737.24 L452.0 737.34 L453.0 737.43 L454.0 737.53 L455.0 737.62 L456.0 737.71 L457.0 737.80 L458.0 737.89 L459.0 737.98 L460.0 738.09 L461.0 738.20 L462.0 738.31 L463.0 738.43 L464.0 738.56 L465.0 738.68 L466.0 738.81 L467.0 738.94 L468.0 739.07 L469.0 739.20 L470.0 739.32 L471.0 739.45 L472.0 739.57 L473.0 739.69 L474.0 739.80 L475.0 739.90 L476.0 740.00 L477.0 740.09 L478.0 740.17 L479.0 740.24 L480.0 740.31 L481.0 740.35 L482.0 740.39 L483.0 740.42 L484.0 740.44 L485.0 740.47 L486.0 740.49 L487.0 740.51 L488.0 740.53 L489.0 740.55 L490.0 740.57 L491.0 740.59 L492.0 740.60 L493.0 740.62 L494.0 740.64 L495.0 740.65 L496.0 740.66 L497.0 740.68 L498.0 740.69 L499.0 740.70 L500.0 740.71 L501.0 740.73 L502.0 740.74 L503.0 740.75 L504.0 740.76 L505.0 740.77 L506.0 740.78 L507.0 740.79 L508.0 740.80 L509.0 740.81 L510.0 740.82 L511.0 740.83 L512.0 740.84 L513.0 740.85 L514.0 740.86 L515.0 740.87 L516.0 740.88 L517.0 740.89 L518.0 740.90 L519.0 740.92 L520.0 740.93 L521.0 740.94 L522.0 740.95 L523.0 740.97 L524.0 740.98 L525.0 741.00 L526.0 741.02 L527.0 741.03 L528.0 741.05 L529.0 741.07 L530.0 741.08 L531.0 741.10 L532.0 741.12 L533.0 741.14 L534.0 741.16 L535.0 741.17 L536.0 741.19 L537.0 741.21 L538.0 741.23 L539.0 741.25 L540.0 741.27 L541.0 741.29 L542.0 741.31 L543.0 741.33 L544.0 741.35 L545.0 741.37 L546.0 741.38 L547.0 741.40 L548.0 741.42 L549.0 741.44 L550.0 741.46 L551.0 741.48 L552.0 741.50 L553.0 741.52 L554.0 741.54 L555.0 741.56 L556.0 741.58 L557.0 741.60 L558.0 741.62 L559.0 741.64 L560.0 741.66 L561.0 741.68 L562.0 741.70 L563.0 741.72 L564.0 741.74 L565.0 741.76 L566.0 741.78 L567.0 741.80 L568.0 741.82 L569.0 741.84 L570.0 741.86 L571.0 741.88 L572.0 741.89 L573.0 741.91 L574.0 741.93 L575.0 741.95 L576.0 741.97 L577.0 741.99 L578.0 742.01 L579.0 742.03 L580.0 742.04 L581.0 742.06 L582.0 742.08 L583.0 742.10 L584.0 742.12 L585.0 742.14 L586.0 742.16 L587.0 742.18 L588.0 742.19 L589.0 742.21 L590.0 742.23 L591.0 742.25 L592.0 742.27 L593.0 742.29 L594.0 742.31 L595.0 742.33 L596.0 742.35 L597.0 742.36 L598.0 742.38 L599.0 742.40 L600.0 742.42 L601.0 742.44 L602.0 742.46 L603.0 742.48 L604.0 742.50 L605.0 742.52 L606.0 742.54 L607.0 742.56 L608.0 742.58 L609.0 742.60 L610.0 742.62 L611.0 742.64 L612.0 742.66 L613.0 742.68 L614.0 742.70 L615.0 742.72 L616.0 742.75 L617.0 742.77 L618.0 742.79 L619.0 742.81 L620.0 742.83 L621.0 742.86 L622.0 742.88 L623.0 742.90 L624.0 742.92 L625.0 742.95 L626.0 742.97 L627.0 742.99 L628.0 743.01 L629.0 743.04 L630.0 743.06 L631.0 743.08 L632.0 743.10 L633.0 743.12 L634.0 743.15 L635.0 743.17 L636.0 743.19 L637.0 743.21 L638.0 743.23 L639.0 743.26 L640.0 743.28 L641.0 743.30 L642.0 743.32 L643.0 743.34 L644.0 743.36 L645.0 743.38 L646.0 743.40 L647.0 743.42 L648.0 743.44 L649.0 743.46 L650.0 743.48 L651.0 743.50 L652.0 743.52 L653.0 743.54 L654.0 743.56 L655.0 743.58 L656.0 743.59 L657.0 743.61 L658.0 743.63 L659.0 743.65 L660.0 743.67 L661.0 743.69 L662.0 743.71 L663.0 743.72 L664.0 743.74 L665.0 743.76 L666.0 743.78 L667.0 743.80 L668.0 743.81 L669.0 743.83 L670.0 743.85 L671.0 743.87 L672.0 743.88 L673.0 743.90 L674.0 743.92 L675.0 743.94 L676.0 743.95 L677.0 743.97 L678.0 743.99 L679.0 744.00 L680.0 744.02 L681.0 744.03 L682.0 744.05 L683.0 744.06 L684.0 744.08 L685.0 744.09 L686.0 744.11 L687.0 744.12 L688.0 744.14 L689.0 744.15 L690.0 744.16 L691.0 744.18 L692.0 744.19 L693.0 744.20 L694.0 744.21 L695.0 744.22 L696.0 744.24 L697.0 744.25 L698.0 744.26 L699.0 744.28 L700.0 744.29 L701.0 744.30 L702.0 744.31 L703.0 744.33 L704.0 744.34 L705.0 744.35 L706.0 744.37 L707.0 744.38 L708.0 744.39 L709.0 744.40 L710.0 744.42 L711.0 744.43 L712.0 744.44 L713.0 744.45 L714.0 744.46 L715.0 744.47 L716.0 744.49 L717.0 744.50 L718.0 744.51 L719.0 744.52 L720.0 744.53 L721.0 744.53 L722.0 744.54 L723.0 744.55 L724.0 744.56 L725.0 744.56 L726.0 744.57 L727.0 744.58 L728.0 744.58 L729.0 744.59 L730.0 744.59 L731.0 744.59 L732.0 744.60 L733.0 744.60 L734.0 744.60 L735.0 744.60 L736.0 744.60 L737.0 744.60 L738.0 744.60 L739.0 744.60 L740.0 744.60 L741.0 744.60 L742.0 744.60 L743.0 744.60 L744.0 744.60 L745.0 744.59 L746.0 744.59 L747.0 744.59 L748.0 744.59 L749.0 744.59 L750.0 744.59 L751.0 744.58 L752.0 744.58 L753.0 744.58 L754.0 744.58 L755.0 744.58 L756.0 744.57 L757.0 744.57 L758.0 744.57 L759.0 744.57 L760.0 744.56 L761.0 744.56 L762.0 744.56 L763.0 744.55 L764.0 744.55 L765.0 744.55 L766.0 744.54 L767.0 744.54 L768.0 744.54 L769.0 744.53 L770.0 744.53 L771.0 744.53 L772.0 744.52 L773.0 744.52 L774.0 744.51 L775.0 744.51 L776.0 744.50 L777.0 744.50 L778.0 744.49 L779.0 744.49 L780.0 744.48 L781.0 744.46 L782.0 744.45 L783.0 744.43 L784.0 744.41 L785.0 744.39 L786.0 744.37 L787.0 744.34 L788.0 744.32 L789.0 744.29 L790.0 744.26 L791.0 744.22 L792.0 744.19 L793.0 744.15 L794.0 744.12 L795.0 744.08 L796.0 744.04 L797.0 743.99 L798.0 743.95 L799.0 743.90 L800.0 743.86 L801.0 743.81 L802.0 743.76 L803.0 743.71 L804.0 743.66 L805.0 743.60 L806.0 743.55 L807.0 743.49 L808.0 743.44 L809.0 743.38 L810.0 743.32 L811.0 743.26 L812.0 743.20 L813.0 743.14 L814.0 743.08 L815.0 743.02 L816.0 742.95 L817.0 742.89 L818.0 742.83 L819.0 742.76 L820.0 742.68 L821.0 742.59 L822.0 742.48 L823.0 742.37 L824.0 742.24 L825.0 742.11 L826.0 741.97 L827.0 741.83 L828.0 741.68 L829.0 741.52 L830.0 741.37 L831.0 741.21 L832.0 741.05 L833.0 740.89 L834.0 740.73 L835.0 740.57 L836.0 740.42 L837.0 740.27 L838.0 740.13 L839.0 739.99 L840.0 739.86 L841.0 739.74 L842.0 739.63 L843.0 739.53 L844.0 739.45 L845.0 739.37 L846.0 739.30 L847.0 739.22 L848.0 739.15 L849.0 739.07 L850.0 739.00 L851.0 738.93 L852.0 738.86 L853.0 738.80 L854.0 738.74 L855.0 738.68 L856.0 738.64 L857.0 738.59 L858.0 738.56 L859.0 738.53 L860.0 738.51 L861.0 738.50 L862.0 738.50 L863.0 738.52 L864.0 738.56 L865.0 738.61 L866.0 738.67 L867.0 738.75 L868.0 738.84 L869.0 738.93 L870.0 739.03 L871.0 739.14 L872.0 739.25 L873.0 739.36 L874.0 739.47 L875.0 739.57 L876.0 739.68 L877.0 739.78 L878.0 739.87 L879.0 739.95 L880.0 740.04 L881.0 740.12 L882.0 740.22 L883.0 740.31 L884.0 740.40 L885.0 740.50 L886.0 740.59 L887.0 740.69 L888.0 740.79 L889.0 740.88 L890.0 740.98 L891.0 741.07 L892.0 741.16 L893.0 741.25 L894.0 741.33 L895.0 741.41 L896.0 741.49 L897.0 741.57 L898.0 741.64 L899.0 741.70 L900.0 741.76 L901.0 741.81 L902.0 741.86 L903.0 741.90 L904.0 741.94 L905.0 741.97 L906.0 742.01 L907.0 742.04 L908.0 742.08 L909.0 742.11 L910.0 742.14 L911.0 742.18 L912.0 742.21 L913.0 742.24 L914.0 742.27 L915.0 742.30 L916.0 742.33 L917.0 742.36 L918.0 742.39 L919.0 742.42 L920.0 742.45 L921.0 742.47 L922.0 742.50 L923.0 742.52 L924.0 742.55 L925.0 742.57 L926.0 742.59 L927.0 742.61 L928.0 742.63 L929.0 742.65 L930.0 742.67 L931.0 742.69 L932.0 742.70 L933.0 742.72 L934.0 742.73 L935.0 742.74 L936.0 742.76 L937.0 742.77 L938.0 742.78 L939.0 742.78 L940.0 742.79 L941.0 742.79 L942.0 742.80 L943.0 742.80 L944.0 742.80 L944 745 L106 745 Z" fill="rgba(255,120,20,0.22)"/>
<path d="M106.0 681.40 L107.0 680.45 L108.0 679.51 L109.0 678.57 L110.0 677.65 L111.0 676.73 L112.0 675.83 L113.0 674.93 L114.0 674.04 L115.0 673.16 L116.0 672.29 L117.0 671.43 L118.0 670.58 L119.0 669.74 L120.0 668.90 L121.0 668.08 L122.0 667.26 L123.0 666.46 L124.0 665.66 L125.0 664.87 L126.0 664.09 L127.0 663.33 L128.0 662.57 L129.0 661.82 L130.0 661.09 L131.0 660.36 L132.0 659.64 L133.0 658.92 L134.0 658.21 L135.0 657.51 L136.0 656.81 L137.0 656.12 L138.0 655.44 L139.0 654.75 L140.0 654.06 L141.0 653.37 L142.0 652.69 L143.0 652.00 L144.0 651.33 L145.0 650.67 L146.0 650.01 L147.0 649.38 L148.0 648.76 L149.0 648.17 L150.0 647.59 L151.0 647.05 L152.0 646.52 L153.0 646.00 L154.0 645.49 L155.0 645.00 L156.0 644.51 L157.0 644.04 L158.0 643.58 L159.0 643.14 L160.0 642.71 L161.0 642.30 L162.0 641.90 L163.0 641.52 L164.0 641.16 L165.0 640.81 L166.0 640.48 L167.0 640.17 L168.0 639.87 L169.0 639.57 L170.0 639.28 L171.0 639.00 L172.0 638.72 L173.0 638.45 L174.0 638.17 L175.0 637.88 L176.0 637.59 L177.0 637.29 L178.0 636.99 L179.0 636.69 L180.0 636.38 L181.0 636.08 L182.0 635.78 L183.0 635.48 L184.0 635.18 L185.0 634.88 L186.0 634.58 L187.0 634.29 L188.0 634.01 L189.0 633.73 L190.0 633.45 L191.0 633.19 L192.0 632.92 L193.0 632.67 L194.0 632.41 L195.0 632.16 L196.0 631.90 L197.0 631.65 L198.0 631.39 L199.0 631.13 L200.0 630.87 L201.0 630.60 L202.0 630.32 L203.0 630.04 L204.0 629.76 L205.0 629.47 L206.0 629.17 L207.0 628.88 L208.0 628.58 L209.0 628.28 L210.0 627.98 L211.0 627.67 L212.0 627.37 L213.0 627.07 L214.0 626.77 L215.0 626.47 L216.0 626.17 L217.0 625.87 L218.0 625.58 L219.0 625.29 L220.0 625.01 L221.0 624.73 L222.0 624.45 L223.0 624.18 L224.0 623.92 L225.0 623.66 L226.0 623.40 L227.0 623.13 L228.0 622.87 L229.0 622.60 L230.0 622.34 L231.0 622.07 L232.0 621.81 L233.0 621.55 L234.0 621.30 L235.0 621.04 L236.0 620.79 L237.0 620.55 L238.0 620.31 L239.0 620.07 L240.0 619.85 L241.0 619.63 L242.0 619.41 L243.0 619.20 L244.0 619.01 L245.0 618.82 L246.0 618.64 L247.0 618.47 L248.0 618.30 L249.0 618.15 L250.0 618.00 L251.0 617.86 L252.0 617.72 L253.0 617.58 L254.0 617.45 L255.0 617.32 L256.0 617.20 L257.0 617.08 L258.0 616.96 L259.0 616.84 L260.0 616.73 L261.0 616.62 L262.0 616.51 L263.0 616.40 L264.0 616.29 L265.0 616.18 L266.0 616.07 L267.0 615.96 L268.0 615.85 L269.0 615.74 L270.0 615.63 L271.0 615.51 L272.0 615.40 L273.0 615.28 L274.0 615.16 L275.0 615.04 L276.0 614.92 L277.0 614.80 L278.0 614.68 L279.0 614.55 L280.0 614.43 L281.0 614.31 L282.0 614.20 L283.0 614.08 L284.0 613.96 L285.0 613.85 L286.0 613.74 L287.0 613.63 L288.0 613.52 L289.0 613.42 L290.0 613.32 L291.0 613.23 L292.0 613.13 L293.0 613.05 L294.0 612.96 L295.0 612.88 L296.0 612.81 L297.0 612.73 L298.0 612.66 L299.0 612.59 L300.0 612.51 L301.0 612.44 L302.0 612.37 L303.0 612.31 L304.0 612.24 L305.0 612.17 L306.0 612.11 L307.0 612.05 L308.0 611.99 L309.0 611.93 L310.0 611.88 L311.0 611.82 L312.0 611.77 L313.0 611.72 L314.0 611.68 L315.0 611.63 L316.0 611.59 L317.0 611.55 L318.0 611.52 L319.0 611.48 L320.0 611.45 L321.0 611.42 L322.0 611.38 L323.0 611.35 L324.0 611.32 L325.0 611.29 L326.0 611.25 L327.0 611.22 L328.0 611.20 L329.0 611.17 L330.0 611.14 L331.0 611.12 L332.0 611.09 L333.0 611.07 L334.0 611.06 L335.0 611.04 L336.0 611.03 L337.0 611.01 L338.0 611.01 L339.0 611.00 L340.0 611.00 L341.0 611.00 L342.0 611.00 L343.0 611.00 L344.0 611.00 L345.0 611.00 L346.0 611.00 L347.0 611.00 L348.0 611.00 L349.0 611.00 L350.0 611.00 L351.0 611.00 L352.0 611.00 L353.0 611.00 L354.0 611.00 L355.0 611.00 L356.0 611.00 L357.0 611.00 L358.0 611.00 L359.0 611.00 L360.0 610.99 L361.0 610.99 L362.0 610.98 L363.0 610.97 L364.0 610.96 L365.0 610.95 L366.0 610.93 L367.0 610.92 L368.0 610.90 L369.0 610.89 L370.0 610.87 L371.0 610.85 L372.0 610.83 L373.0 610.81 L374.0 610.78 L375.0 610.76 L376.0 610.73 L377.0 610.71 L378.0 610.68 L379.0 610.66 L380.0 610.63 L381.0 610.60 L382.0 610.58 L383.0 610.55 L384.0 610.52 L385.0 610.49 L386.0 610.46 L387.0 610.44 L388.0 610.41 L389.0 610.38 L390.0 610.35 L391.0 610.32 L392.0 610.29 L393.0 610.27 L394.0 610.24 L395.0 610.21 L396.0 610.19 L397.0 610.16 L398.0 610.14 L399.0 610.11 L400.0 610.09 L401.0 610.06 L402.0 610.04 L403.0 610.02 L404.0 609.99 L405.0 609.97 L406.0 609.95 L407.0 609.92 L408.0 609.90 L409.0 609.88 L410.0 609.85 L411.0 609.83 L412.0 609.80 L413.0 609.78 L414.0 609.76 L415.0 609.73 L416.0 609.71 L417.0 609.68 L418.0 609.66 L419.0 609.63 L420.0 609.61 L421.0 609.58 L422.0 609.56 L423.0 609.53 L424.0 609.51 L425.0 609.48 L426.0 609.45 L427.0 609.43 L428.0 609.40 L429.0 609.37 L430.0 609.34 L431.0 609.32 L432.0 609.29 L433.0 609.26 L434.0 609.23 L435.0 609.20 L436.0 609.17 L437.0 609.14 L438.0 609.11 L439.0 609.08 L440.0 609.05 L441.0 609.02 L442.0 608.99 L443.0 608.95 L444.0 608.92 L445.0 608.89 L446.0 608.85 L447.0 608.81 L448.0 608.78 L449.0 608.74 L450.0 608.70 L451.0 608.66 L452.0 608.62 L453.0 608.58 L454.0 608.54 L455.0 608.50 L456.0 608.46 L457.0 608.41 L458.0 608.37 L459.0 608.33 L460.0 608.28 L461.0 608.24 L462.0 608.20 L463.0 608.15 L464.0 608.11 L465.0 608.06 L466.0 608.02 L467.0 607.98 L468.0 607.93 L469.0 607.89 L470.0 607.85 L471.0 607.80 L472.0 607.76 L473.0 607.72 L474.0 607.67 L475.0 607.63 L476.0 607.59 L477.0 607.55 L478.0 607.51 L479.0 607.47 L480.0 607.43 L481.0 607.39 L482.0 607.35 L483.0 607.31 L484.0 607.28 L485.0 607.24 L486.0 607.20 L487.0 607.17 L488.0 607.13 L489.0 607.09 L490.0 607.06 L491.0 607.02 L492.0 606.98 L493.0 606.95 L494.0 606.91 L495.0 606.87 L496.0 606.84 L497.0 606.80 L498.0 606.76 L499.0 606.73 L500.0 606.69 L501.0 606.66 L502.0 606.62 L503.0 606.59 L504.0 606.55 L505.0 606.52 L506.0 606.48 L507.0 606.45 L508.0 606.41 L509.0 606.38 L510.0 606.35 L511.0 606.32 L512.0 606.28 L513.0 606.25 L514.0 606.22 L515.0 606.19 L516.0 606.16 L517.0 606.13 L518.0 606.10 L519.0 606.07 L520.0 606.04 L521.0 606.02 L522.0 605.99 L523.0 605.96 L524.0 605.94 L525.0 605.91 L526.0 605.89 L527.0 605.86 L528.0 605.84 L529.0 605.82 L530.0 605.79 L531.0 605.77 L532.0 605.75 L533.0 605.73 L534.0 605.70 L535.0 605.68 L536.0 605.66 L537.0 605.64 L538.0 605.62 L539.0 605.60 L540.0 605.58 L541.0 605.56 L542.0 605.54 L543.0 605.52 L544.0 605.50 L545.0 605.48 L546.0 605.46 L547.0 605.44 L548.0 605.43 L549.0 605.41 L550.0 605.39 L551.0 605.37 L552.0 605.35 L553.0 605.34 L554.0 605.32 L555.0 605.30 L556.0 605.28 L557.0 605.27 L558.0 605.25 L559.0 605.23 L560.0 605.22 L561.0 605.20 L562.0 605.18 L563.0 605.17 L564.0 605.15 L565.0 605.13 L566.0 605.12 L567.0 605.10 L568.0 605.08 L569.0 605.07 L570.0 605.05 L571.0 605.04 L572.0 605.02 L573.0 605.01 L574.0 604.99 L575.0 604.98 L576.0 604.96 L577.0 604.95 L578.0 604.93 L579.0 604.92 L580.0 604.90 L581.0 604.89 L582.0 604.88 L583.0 604.86 L584.0 604.85 L585.0 604.84 L586.0 604.82 L587.0 604.81 L588.0 604.79 L589.0 604.78 L590.0 604.77 L591.0 604.75 L592.0 604.74 L593.0 604.73 L594.0 604.71 L595.0 604.70 L596.0 604.69 L597.0 604.67 L598.0 604.66 L599.0 604.65 L600.0 604.63 L601.0 604.62 L602.0 604.60 L603.0 604.59 L604.0 604.57 L605.0 604.56 L606.0 604.55 L607.0 604.53 L608.0 604.52 L609.0 604.50 L610.0 604.48 L611.0 604.47 L612.0 604.45 L613.0 604.43 L614.0 604.42 L615.0 604.40 L616.0 604.38 L617.0 604.36 L618.0 604.34 L619.0 604.32 L620.0 604.30 L621.0 604.29 L622.0 604.27 L623.0 604.25 L624.0 604.23 L625.0 604.21 L626.0 604.19 L627.0 604.17 L628.0 604.15 L629.0 604.13 L630.0 604.11 L631.0 604.09 L632.0 604.07 L633.0 604.05 L634.0 604.03 L635.0 604.01 L636.0 604.00 L637.0 603.98 L638.0 603.96 L639.0 603.95 L640.0 603.93 L641.0 603.92 L642.0 603.90 L643.0 603.89 L644.0 603.87 L645.0 603.86 L646.0 603.85 L647.0 603.84 L648.0 603.83 L649.0 603.82 L650.0 603.81 L651.0 603.80 L652.0 603.79 L653.0 603.79 L654.0 603.78 L655.0 603.77 L656.0 603.76 L657.0 603.76 L658.0 603.75 L659.0 603.74 L660.0 603.74 L661.0 603.73 L662.0 603.72 L663.0 603.71 L664.0 603.71 L665.0 603.70 L666.0 603.70 L667.0 603.69 L668.0 603.68 L669.0 603.68 L670.0 603.67 L671.0 603.67 L672.0 603.66 L673.0 603.66 L674.0 603.65 L675.0 603.65 L676.0 603.64 L677.0 603.64 L678.0 603.63 L679.0 603.63 L680.0 603.63 L681.0 603.62 L682.0 603.62 L683.0 603.62 L684.0 603.61 L685.0 603.61 L686.0 603.61 L687.0 603.61 L688.0 603.60 L689.0 603.60 L690.0 603.60 L691.0 603.60 L692.0 603.60 L693.0 603.60 L694.0 603.60 L695.0 603.60 L696.0 603.60 L697.0 603.60 L698.0 603.60 L699.0 603.60 L700.0 603.60 L701.0 603.60 L702.0 603.60 L703.0 603.60 L704.0 603.60 L705.0 603.60 L706.0 603.60 L707.0 603.60 L708.0 603.60 L709.0 603.60 L710.0 603.60 L711.0 603.60 L712.0 603.60 L713.0 603.60 L714.0 603.60 L715.0 603.60 L716.0 603.60 L717.0 603.60 L718.0 603.60 L719.0 603.60 L720.0 603.60 L721.0 603.60 L722.0 603.60 L723.0 603.60 L724.0 603.60 L725.0 603.60 L726.0 603.60 L727.0 603.60 L728.0 603.60 L729.0 603.60 L730.0 603.60 L731.0 603.60 L732.0 603.60 L733.0 603.60 L734.0 603.60 L735.0 603.60 L736.0 603.60 L737.0 603.60 L738.0 603.60 L739.0 603.60 L740.0 603.60 L741.0 603.60 L742.0 603.60 L743.0 603.60 L744.0 603.60 L745.0 603.60 L746.0 603.60 L747.0 603.60 L748.0 603.60 L749.0 603.60 L750.0 603.60 L751.0 603.60 L752.0 603.60 L753.0 603.60 L754.0 603.60 L755.0 603.60 L756.0 603.60 L757.0 603.60 L758.0 603.60 L759.0 603.60 L760.0 603.60 L761.0 603.60 L762.0 603.60 L763.0 603.60 L764.0 603.60 L765.0 603.60 L766.0 603.60 L767.0 603.60 L768.0 603.60 L769.0 603.60 L770.0 603.60 L771.0 603.60 L772.0 603.60 L773.0 603.60 L774.0 603.60 L775.0 603.60 L776.0 603.60 L777.0 603.60 L778.0 603.60 L779.0 603.60 L780.0 603.60 L781.0 603.60 L782.0 603.60 L783.0 603.59 L784.0 603.59 L785.0 603.59 L786.0 603.59 L787.0 603.58 L788.0 603.58 L789.0 603.58 L790.0 603.57 L791.0 603.57 L792.0 603.56 L793.0 603.56 L794.0 603.55 L795.0 603.55 L796.0 603.54 L797.0 603.54 L798.0 603.53 L799.0 603.53 L800.0 603.52 L801.0 603.52 L802.0 603.51 L803.0 603.50 L804.0 603.50 L805.0 603.49 L806.0 603.48 L807.0 603.48 L808.0 603.47 L809.0 603.46 L810.0 603.46 L811.0 603.45 L812.0 603.44 L813.0 603.44 L814.0 603.43 L815.0 603.42 L816.0 603.42 L817.0 603.41 L818.0 603.40 L819.0 603.39 L820.0 603.39 L821.0 603.38 L822.0 603.37 L823.0 603.36 L824.0 603.36 L825.0 603.35 L826.0 603.34 L827.0 603.33 L828.0 603.32 L829.0 603.31 L830.0 603.30 L831.0 603.29 L832.0 603.28 L833.0 603.27 L834.0 603.26 L835.0 603.25 L836.0 603.24 L837.0 603.23 L838.0 603.22 L839.0 603.20 L840.0 603.19 L841.0 603.18 L842.0 603.17 L843.0 603.15 L844.0 603.14 L845.0 603.13 L846.0 603.11 L847.0 603.10 L848.0 603.09 L849.0 603.07 L850.0 603.06 L851.0 603.04 L852.0 603.03 L853.0 603.02 L854.0 603.00 L855.0 602.99 L856.0 602.97 L857.0 602.95 L858.0 602.94 L859.0 602.92 L860.0 602.91 L861.0 602.89 L862.0 602.87 L863.0 602.85 L864.0 602.83 L865.0 602.81 L866.0 602.79 L867.0 602.77 L868.0 602.75 L869.0 602.72 L870.0 602.70 L871.0 602.67 L872.0 602.65 L873.0 602.62 L874.0 602.59 L875.0 602.56 L876.0 602.54 L877.0 602.51 L878.0 602.48 L879.0 602.45 L880.0 602.42 L881.0 602.39 L882.0 602.36 L883.0 602.33 L884.0 602.30 L885.0 602.27 L886.0 602.24 L887.0 602.21 L888.0 602.18 L889.0 602.15 L890.0 602.12 L891.0 602.09 L892.0 602.07 L893.0 602.04 L894.0 602.01 L895.0 601.98 L896.0 601.95 L897.0 601.93 L898.0 601.90 L899.0 601.88 L900.0 601.85 L901.0 601.83 L902.0 601.81 L903.0 601.78 L904.0 601.76 L905.0 601.74 L906.0 601.72 L907.0 601.70 L908.0 601.68 L909.0 601.65 L910.0 601.63 L911.0 601.61 L912.0 601.59 L913.0 601.57 L914.0 601.55 L915.0 601.53 L916.0 601.51 L917.0 601.49 L918.0 601.47 L919.0 601.45 L920.0 601.43 L921.0 601.41 L922.0 601.39 L923.0 601.37 L924.0 601.35 L925.0 601.33 L926.0 601.31 L927.0 601.29 L928.0 601.28 L929.0 601.26 L930.0 601.24 L931.0 601.22 L932.0 601.20 L933.0 601.19 L934.0 601.17 L935.0 601.15 L936.0 601.13 L937.0 601.12 L938.0 601.10 L939.0 601.08 L940.0 601.07 L941.0 601.05 L942.0 601.03 L943.0 601.02 L944.0 601.00 L944.2 601.00" fill="none" stroke="#efb02e" stroke-width="1.7"/>
<path d="M106.0 613.40 L107.0 617.32 L108.0 621.11 L109.0 624.76 L110.0 628.26 L111.0 631.60 L112.0 634.78 L113.0 637.78 L114.0 640.60 L115.0 643.26 L116.0 645.80 L117.0 648.27 L118.0 650.71 L119.0 653.15 L120.0 655.65 L121.0 658.18 L122.0 660.65 L123.0 662.98 L124.0 665.11 L125.0 667.02 L126.0 668.85 L127.0 670.60 L128.0 672.26 L129.0 673.82 L130.0 675.27 L131.0 676.61 L132.0 677.84 L133.0 678.99 L134.0 680.10 L135.0 681.16 L136.0 682.17 L137.0 683.10 L138.0 683.97 L139.0 684.76 L140.0 685.46 L141.0 686.08 L142.0 686.66 L143.0 687.21 L144.0 687.74 L145.0 688.23 L146.0 688.69 L147.0 689.11 L148.0 689.49 L149.0 689.82 L150.0 690.10 L151.0 690.32 L152.0 690.51 L153.0 690.69 L154.0 690.85 L155.0 691.00 L156.0 691.14 L157.0 691.26 L158.0 691.38 L159.0 691.49 L160.0 691.59 L161.0 691.68 L162.0 691.77 L163.0 691.85 L164.0 691.93 L165.0 692.00 L166.0 692.06 L167.0 692.11 L168.0 692.15 L169.0 692.20 L170.0 692.24 L171.0 692.28 L172.0 692.33 L173.0 692.38 L174.0 692.44 L175.0 692.50 L176.0 692.58 L177.0 692.66 L178.0 692.77 L179.0 692.89 L180.0 693.03 L181.0 693.19 L182.0 693.35 L183.0 693.53 L184.0 693.72 L185.0 693.92 L186.0 694.13 L187.0 694.34 L188.0 694.56 L189.0 694.78 L190.0 695.00 L191.0 695.23 L192.0 695.48 L193.0 695.73 L194.0 696.00 L195.0 696.28 L196.0 696.58 L197.0 696.91 L198.0 697.25 L199.0 697.61 L200.0 698.01 L201.0 698.42 L202.0 698.89 L203.0 699.45 L204.0 700.10 L205.0 700.83 L206.0 701.60 L207.0 702.39 L208.0 703.20 L209.0 704.00 L210.0 704.82 L211.0 705.70 L212.0 706.62 L213.0 707.56 L214.0 708.52 L215.0 709.46 L216.0 710.37 L217.0 711.24 L218.0 712.05 L219.0 712.79 L220.0 713.49 L221.0 714.17 L222.0 714.82 L223.0 715.46 L224.0 716.07 L225.0 716.65 L226.0 717.21 L227.0 717.74 L228.0 718.25 L229.0 718.74 L230.0 719.22 L231.0 719.69 L232.0 720.14 L233.0 720.58 L234.0 721.01 L235.0 721.42 L236.0 721.80 L237.0 722.17 L238.0 722.51 L239.0 722.82 L240.0 723.11 L241.0 723.39 L242.0 723.66 L243.0 723.92 L244.0 724.16 L245.0 724.40 L246.0 724.63 L247.0 724.84 L248.0 725.05 L249.0 725.24 L250.0 725.43 L251.0 725.60 L252.0 725.76 L253.0 725.91 L254.0 726.05 L255.0 726.18 L256.0 726.29 L257.0 726.39 L258.0 726.48 L259.0 726.57 L260.0 726.66 L261.0 726.76 L262.0 726.86 L263.0 726.96 L264.0 727.08 L265.0 727.21 L266.0 727.35 L267.0 727.52 L268.0 727.72 L269.0 727.95 L270.0 728.21 L271.0 728.49 L272.0 728.79 L273.0 729.10 L274.0 729.42 L275.0 729.74 L276.0 730.07 L277.0 730.39 L278.0 730.71 L279.0 731.02 L280.0 731.32 L281.0 731.62 L282.0 731.92 L283.0 732.23 L284.0 732.54 L285.0 732.86 L286.0 733.17 L287.0 733.48 L288.0 733.80 L289.0 734.10 L290.0 734.41 L291.0 734.71 L292.0 735.00 L293.0 735.29 L294.0 735.56 L295.0 735.83 L296.0 736.09 L297.0 736.36 L298.0 736.62 L299.0 736.89 L300.0 737.15 L301.0 737.41 L302.0 737.66 L303.0 737.89 L304.0 738.12 L305.0 738.33 L306.0 738.53 L307.0 738.70 L308.0 738.86 L309.0 738.99 L310.0 739.13 L311.0 739.25 L312.0 739.38 L313.0 739.50 L314.0 739.61 L315.0 739.73 L316.0 739.83 L317.0 739.94 L318.0 740.04 L319.0 740.13 L320.0 740.22 L321.0 740.31 L322.0 740.39 L323.0 740.47 L324.0 740.55 L325.0 740.62 L326.0 740.68 L327.0 740.74 L328.0 740.80 L329.0 740.85 L330.0 740.90 L331.0 740.95 L332.0 740.99 L333.0 741.03 L334.0 741.07 L335.0 741.11 L336.0 741.15 L337.0 741.19 L338.0 741.23 L339.0 741.26 L340.0 741.29 L341.0 741.33 L342.0 741.36 L343.0 741.39 L344.0 741.42 L345.0 741.45 L346.0 741.47 L347.0 741.50 L348.0 741.52 L349.0 741.55 L350.0 741.57 L351.0 741.59 L352.0 741.61 L353.0 741.63 L354.0 741.65 L355.0 741.67 L356.0 741.68 L357.0 741.70 L358.0 741.71 L359.0 741.73 L360.0 741.74 L361.0 741.76 L362.0 741.77 L363.0 741.79 L364.0 741.80 L365.0 741.82 L366.0 741.83 L367.0 741.84 L368.0 741.86 L369.0 741.87 L370.0 741.88 L371.0 741.90 L372.0 741.91 L373.0 741.92 L374.0 741.93 L375.0 741.94 L376.0 741.96 L377.0 741.97 L378.0 741.98 L379.0 741.99 L380.0 742.00 L381.0 742.01 L382.0 742.02 L383.0 742.02 L384.0 742.03 L385.0 742.04 L386.0 742.05 L387.0 742.06 L388.0 742.06 L389.0 742.07 L390.0 742.07 L391.0 742.08 L392.0 742.08 L393.0 742.09 L394.0 742.09 L395.0 742.09 L396.0 742.10 L397.0 742.10 L398.0 742.10 L399.0 742.10 L400.0 742.09 L401.0 742.04 L402.0 741.96 L403.0 741.83 L404.0 741.68 L405.0 741.51 L406.0 741.31 L407.0 741.10 L408.0 740.88 L409.0 740.65 L410.0 740.43 L411.0 740.20 L412.0 739.99 L413.0 739.78 L414.0 739.60 L415.0 739.44 L416.0 739.27 L417.0 739.10 L418.0 738.92 L419.0 738.74 L420.0 738.55 L421.0 738.37 L422.0 738.20 L423.0 738.02 L424.0 737.85 L425.0 737.70 L426.0 737.55 L427.0 737.41 L428.0 737.29 L429.0 737.18 L430.0 737.09 L431.0 737.03 L432.0 736.98 L433.0 736.93 L434.0 736.89 L435.0 736.85 L436.0 736.81 L437.0 736.78 L438.0 736.75 L439.0 736.73 L440.0 736.71 L441.0 736.70 L442.0 736.70 L443.0 736.71 L444.0 736.74 L445.0 736.78 L446.0 736.84 L447.0 736.90 L448.0 736.98 L449.0 737.06 L450.0 737.15 L451.0 737.24 L452.0 737.34 L453.0 737.43 L454.0 737.53 L455.0 737.62 L456.0 737.71 L457.0 737.80 L458.0 737.89 L459.0 737.98 L460.0 738.09 L461.0 738.20 L462.0 738.31 L463.0 738.43 L464.0 738.56 L465.0 738.68 L466.0 738.81 L467.0 738.94 L468.0 739.07 L469.0 739.20 L470.0 739.32 L471.0 739.45 L472.0 739.57 L473.0 739.69 L474.0 739.80 L475.0 739.90 L476.0 740.00 L477.0 740.09 L478.0 740.17 L479.0 740.24 L480.0 740.31 L481.0 740.35 L482.0 740.39 L483.0 740.42 L484.0 740.44 L485.0 740.47 L486.0 740.49 L487.0 740.51 L488.0 740.53 L489.0 740.55 L490.0 740.57 L491.0 740.59 L492.0 740.60 L493.0 740.62 L494.0 740.64 L495.0 740.65 L496.0 740.66 L497.0 740.68 L498.0 740.69 L499.0 740.70 L500.0 740.71 L501.0 740.73 L502.0 740.74 L503.0 740.75 L504.0 740.76 L505.0 740.77 L506.0 740.78 L507.0 740.79 L508.0 740.80 L509.0 740.81 L510.0 740.82 L511.0 740.83 L512.0 740.84 L513.0 740.85 L514.0 740.86 L515.0 740.87 L516.0 740.88 L517.0 740.89 L518.0 740.90 L519.0 740.92 L520.0 740.93 L521.0 740.94 L522.0 740.95 L523.0 740.97 L524.0 740.98 L525.0 741.00 L526.0 741.02 L527.0 741.03 L528.0 741.05 L529.0 741.07 L530.0 741.08 L531.0 741.10 L532.0 741.12 L533.0 741.14 L534.0 741.16 L535.0 741.17 L536.0 741.19 L537.0 741.21 L538.0 741.23 L539.0 741.25 L540.0 741.27 L541.0 741.29 L542.0 741.31 L543.0 741.33 L544.0 741.35 L545.0 741.37 L546.0 741.38 L547.0 741.40 L548.0 741.42 L549.0 741.44 L550.0 741.46 L551.0 741.48 L552.0 741.50 L553.0 741.52 L554.0 741.54 L555.0 741.56 L556.0 741.58 L557.0 741.60 L558.0 741.62 L559.0 741.64 L560.0 741.66 L561.0 741.68 L562.0 741.70 L563.0 741.72 L564.0 741.74 L565.0 741.76 L566.0 741.78 L567.0 741.80 L568.0 741.82 L569.0 741.84 L570.0 741.86 L571.0 741.88 L572.0 741.89 L573.0 741.91 L574.0 741.93 L575.0 741.95 L576.0 741.97 L577.0 741.99 L578.0 742.01 L579.0 742.03 L580.0 742.04 L581.0 742.06 L582.0 742.08 L583.0 742.10 L584.0 742.12 L585.0 742.14 L586.0 742.16 L587.0 742.18 L588.0 742.19 L589.0 742.21 L590.0 742.23 L591.0 742.25 L592.0 742.27 L593.0 742.29 L594.0 742.31 L595.0 742.33 L596.0 742.35 L597.0 742.36 L598.0 742.38 L599.0 742.40 L600.0 742.42 L601.0 742.44 L602.0 742.46 L603.0 742.48 L604.0 742.50 L605.0 742.52 L606.0 742.54 L607.0 742.56 L608.0 742.58 L609.0 742.60 L610.0 742.62 L611.0 742.64 L612.0 742.66 L613.0 742.68 L614.0 742.70 L615.0 742.72 L616.0 742.75 L617.0 742.77 L618.0 742.79 L619.0 742.81 L620.0 742.83 L621.0 742.86 L622.0 742.88 L623.0 742.90 L624.0 742.92 L625.0 742.95 L626.0 742.97 L627.0 742.99 L628.0 743.01 L629.0 743.04 L630.0 743.06 L631.0 743.08 L632.0 743.10 L633.0 743.12 L634.0 743.15 L635.0 743.17 L636.0 743.19 L637.0 743.21 L638.0 743.23 L639.0 743.26 L640.0 743.28 L641.0 743.30 L642.0 743.32 L643.0 743.34 L644.0 743.36 L645.0 743.38 L646.0 743.40 L647.0 743.42 L648.0 743.44 L649.0 743.46 L650.0 743.48 L651.0 743.50 L652.0 743.52 L653.0 743.54 L654.0 743.56 L655.0 743.58 L656.0 743.59 L657.0 743.61 L658.0 743.63 L659.0 743.65 L660.0 743.67 L661.0 743.69 L662.0 743.71 L663.0 743.72 L664.0 743.74 L665.0 743.76 L666.0 743.78 L667.0 743.80 L668.0 743.81 L669.0 743.83 L670.0 743.85 L671.0 743.87 L672.0 743.88 L673.0 743.90 L674.0 743.92 L675.0 743.94 L676.0 743.95 L677.0 743.97 L678.0 743.99 L679.0 744.00 L680.0 744.02 L681.0 744.03 L682.0 744.05 L683.0 744.06 L684.0 744.08 L685.0 744.09 L686.0 744.11 L687.0 744.12 L688.0 744.14 L689.0 744.15 L690.0 744.16 L691.0 744.18 L692.0 744.19 L693.0 744.20 L694.0 744.21 L695.0 744.22 L696.0 744.24 L697.0 744.25 L698.0 744.26 L699.0 744.28 L700.0 744.29 L701.0 744.30 L702.0 744.31 L703.0 744.33 L704.0 744.34 L705.0 744.35 L706.0 744.37 L707.0 744.38 L708.0 744.39 L709.0 744.40 L710.0 744.42 L711.0 744.43 L712.0 744.44 L713.0 744.45 L714.0 744.46 L715.0 744.47 L716.0 744.49 L717.0 744.50 L718.0 744.51 L719.0 744.52 L720.0 744.53 L721.0 744.53 L722.0 744.54 L723.0 744.55 L724.0 744.56 L725.0 744.56 L726.0 744.57 L727.0 744.58 L728.0 744.58 L729.0 744.59 L730.0 744.59 L731.0 744.59 L732.0 744.60 L733.0 744.60 L734.0 744.60 L735.0 744.60 L736.0 744.60 L737.0 744.60 L738.0 744.60 L739.0 744.60 L740.0 744.60 L741.0 744.60 L742.0 744.60 L743.0 744.60 L744.0 744.60 L745.0 744.59 L746.0 744.59 L747.0 744.59 L748.0 744.59 L749.0 744.59 L750.0 744.59 L751.0 744.58 L752.0 744.58 L753.0 744.58 L754.0 744.58 L755.0 744.58 L756.0 744.57 L757.0 744.57 L758.0 744.57 L759.0 744.57 L760.0 744.56 L761.0 744.56 L762.0 744.56 L763.0 744.55 L764.0 744.55 L765.0 744.55 L766.0 744.54 L767.0 744.54 L768.0 744.54 L769.0 744.53 L770.0 744.53 L771.0 744.53 L772.0 744.52 L773.0 744.52 L774.0 744.51 L775.0 744.51 L776.0 744.50 L777.0 744.50 L778.0 744.49 L779.0 744.49 L780.0 744.48 L781.0 744.46 L782.0 744.45 L783.0 744.43 L784.0 744.41 L785.0 744.39 L786.0 744.37 L787.0 744.34 L788.0 744.32 L789.0 744.29 L790.0 744.26 L791.0 744.22 L792.0 744.19 L793.0 744.15 L794.0 744.12 L795.0 744.08 L796.0 744.04 L797.0 743.99 L798.0 743.95 L799.0 743.90 L800.0 743.86 L801.0 743.81 L802.0 743.76 L803.0 743.71 L804.0 743.66 L805.0 743.60 L806.0 743.55 L807.0 743.49 L808.0 743.44 L809.0 743.38 L810.0 743.32 L811.0 743.26 L812.0 743.20 L813.0 743.14 L814.0 743.08 L815.0 743.02 L816.0 742.95 L817.0 742.89 L818.0 742.83 L819.0 742.76 L820.0 742.68 L821.0 742.59 L822.0 742.48 L823.0 742.37 L824.0 742.24 L825.0 742.11 L826.0 741.97 L827.0 741.83 L828.0 741.68 L829.0 741.52 L830.0 741.37 L831.0 741.21 L832.0 741.05 L833.0 740.89 L834.0 740.73 L835.0 740.57 L836.0 740.42 L837.0 740.27 L838.0 740.13 L839.0 739.99 L840.0 739.86 L841.0 739.74 L842.0 739.63 L843.0 739.53 L844.0 739.45 L845.0 739.37 L846.0 739.30 L847.0 739.22 L848.0 739.15 L849.0 739.07 L850.0 739.00 L851.0 738.93 L852.0 738.86 L853.0 738.80 L854.0 738.74 L855.0 738.68 L856.0 738.64 L857.0 738.59 L858.0 738.56 L859.0 738.53 L860.0 738.51 L861.0 738.50 L862.0 738.50 L863.0 738.52 L864.0 738.56 L865.0 738.61 L866.0 738.67 L867.0 738.75 L868.0 738.84 L869.0 738.93 L870.0 739.03 L871.0 739.14 L872.0 739.25 L873.0 739.36 L874.0 739.47 L875.0 739.57 L876.0 739.68 L877.0 739.78 L878.0 739.87 L879.0 739.95 L880.0 740.04 L881.0 740.12 L882.0 740.22 L883.0 740.31 L884.0 740.40 L885.0 740.50 L886.0 740.59 L887.0 740.69 L888.0 740.79 L889.0 740.88 L890.0 740.98 L891.0 741.07 L892.0 741.16 L893.0 741.25 L894.0 741.33 L895.0 741.41 L896.0 741.49 L897.0 741.57 L898.0 741.64 L899.0 741.70 L900.0 741.76 L901.0 741.81 L902.0 741.86 L903.0 741.90 L904.0 741.94 L905.0 741.97 L906.0 742.01 L907.0 742.04 L908.0 742.08 L909.0 742.11 L910.0 742.14 L911.0 742.18 L912.0 742.21 L913.0 742.24 L914.0 742.27 L915.0 742.30 L916.0 742.33 L917.0 742.36 L918.0 742.39 L919.0 742.42 L920.0 742.45 L921.0 742.47 L922.0 742.50 L923.0 742.52 L924.0 742.55 L925.0 742.57 L926.0 742.59 L927.0 742.61 L928.0 742.63 L929.0 742.65 L930.0 742.67 L931.0 742.69 L932.0 742.70 L933.0 742.72 L934.0 742.73 L935.0 742.74 L936.0 742.76 L937.0 742.77 L938.0 742.78 L939.0 742.78 L940.0 742.79 L941.0 742.79 L942.0 742.80 L943.0 742.80 L944.0 742.80" fill="none" stroke="#ff7d14" stroke-width="1.7"/>
<line x1="85" y1="745.5" x2="965" y2="745.5" stroke="#6e6e70" stroke-width="1"/>
<line x1="106.0" y1="745.5" x2="106.0" y2="749.5" stroke="#6e6e70" stroke-width="1"/>
<line x1="147.9" y1="745.5" x2="147.9" y2="749.5" stroke="#6e6e70" stroke-width="1"/>
<line x1="189.8" y1="745.5" x2="189.8" y2="749.5" stroke="#6e6e70" stroke-width="1"/>
<line x1="231.7" y1="745.5" x2="231.7" y2="749.5" stroke="#6e6e70" stroke-width="1"/>
<line x1="273.6" y1="745.5" x2="273.6" y2="749.5" stroke="#6e6e70" stroke-width="1"/>
<line x1="315.5" y1="745.5" x2="315.5" y2="749.5" stroke="#6e6e70" stroke-width="1"/>
<line x1="357.5" y1="745.5" x2="357.5" y2="749.5" stroke="#6e6e70" stroke-width="1"/>
<line x1="399.4" y1="745.5" x2="399.4" y2="749.5" stroke="#6e6e70" stroke-width="1"/>
<line x1="441.3" y1="745.5" x2="441.3" y2="749.5" stroke="#6e6e70" stroke-width="1"/>
<line x1="483.2" y1="745.5" x2="483.2" y2="749.5" stroke="#6e6e70" stroke-width="1"/>
<line x1="525.1" y1="745.5" x2="525.1" y2="749.5" stroke="#6e6e70" stroke-width="1"/>
<line x1="567.0" y1="745.5" x2="567.0" y2="749.5" stroke="#6e6e70" stroke-width="1"/>
<line x1="608.9" y1="745.5" x2="608.9" y2="749.5" stroke="#6e6e70" stroke-width="1"/>
<line x1="650.8" y1="745.5" x2="650.8" y2="749.5" stroke="#6e6e70" stroke-width="1"/>
<line x1="692.7" y1="745.5" x2="692.7" y2="749.5" stroke="#6e6e70" stroke-width="1"/>
<line x1="734.6" y1="745.5" x2="734.6" y2="749.5" stroke="#6e6e70" stroke-width="1"/>
<line x1="776.6" y1="745.5" x2="776.6" y2="749.5" stroke="#6e6e70" stroke-width="1"/>
<line x1="818.5" y1="745.5" x2="818.5" y2="749.5" stroke="#6e6e70" stroke-width="1"/>
<line x1="860.4" y1="745.5" x2="860.4" y2="749.5" stroke="#6e6e70" stroke-width="1"/>
<line x1="902.3" y1="745.5" x2="902.3" y2="749.5" stroke="#6e6e70" stroke-width="1"/>
<line x1="944.2" y1="745.5" x2="944.2" y2="749.5" stroke="#6e6e70" stroke-width="1"/>
<circle cx="106.0" cy="555" r="4.3" fill="#52b91e"/>
<circle cx="189.8" cy="555" r="4.3" fill="#52b91e"/>
<circle cx="231.7" cy="555" r="4.3" fill="#52b91e"/>
<circle cx="273.6" cy="555" r="4.3" fill="#52b91e"/>
<circle cx="315.5" cy="555" r="4.3" fill="#52b91e"/>
<circle cx="399.4" cy="555" r="4.3" fill="#52b91e"/>
<circle cx="567.0" cy="555" r="4.3" fill="#52b91e"/>
<circle cx="776.6" cy="555" r="4.3" fill="#52b91e"/>
<circle cx="860.4" cy="555" r="4.3" fill="#52b91e"/>
<circle cx="902.3" cy="555" r="4.3" fill="#52b91e"/>
<text x="78" y="590.0" text-anchor="end" class="ax">400w</text>
<text x="78" y="629.5" text-anchor="end" class="ax">300w</text>
<text x="78" y="669.0" text-anchor="end" class="ax">200w</text>
<text x="78" y="708.5" text-anchor="end" class="ax">100w</text>
<text x="78" y="748.0" text-anchor="end" class="ax">0</text>
<text x="972" y="590.5" class="ax">100w</text>
<text x="972" y="622.5" class="ax">80w</text>
<text x="972" y="653.5" class="ax">60w</text>
<text x="972" y="685.0" class="ax">40w</text>
<text x="972" y="716.5" class="ax">20w</text>
<text x="972" y="748.0" class="ax">0</text>
<text x="106.0" y="759" text-anchor="middle" class="ax">11-04</text>
<text x="147.9" y="759" text-anchor="middle" class="ax">11-05</text>
<text x="189.8" y="759" text-anchor="middle" class="ax">11-06</text>
<text x="231.7" y="759" text-anchor="middle" class="ax">11-07</text>
<text x="273.6" y="759" text-anchor="middle" class="ax">11-08</text>
<text x="315.5" y="759" text-anchor="middle" class="ax">11-09</text>
<text x="357.5" y="759" text-anchor="middle" class="ax">11-10</text>
<text x="399.4" y="759" text-anchor="middle" class="ax">11-11</text>
<text x="441.3" y="759" text-anchor="middle" class="ax">11-12</text>
<text x="483.2" y="759" text-anchor="middle" class="ax">11-13</text>
<text x="525.1" y="759" text-anchor="middle" class="ax">11-14</text>
<text x="567.0" y="759" text-anchor="middle" class="ax">11-15</text>
<text x="608.9" y="759" text-anchor="middle" class="ax">11-16</text>
<text x="650.8" y="759" text-anchor="middle" class="ax">11-17</text>
<text x="692.7" y="759" text-anchor="middle" class="ax">11-18</text>
<text x="734.6" y="759" text-anchor="middle" class="ax">11-19</text>
<text x="776.6" y="759" text-anchor="middle" class="ax">11-20</text>
<text x="818.5" y="759" text-anchor="middle" class="ax">11-21</text>
<text x="860.4" y="759" text-anchor="middle" class="ax">11-22</text>
<text x="902.3" y="759" text-anchor="middle" class="ax">11-23</text>
<text x="944.2" y="759" text-anchor="middle" class="ax">11-24</text>
</svg>

<div class="wm" style="left:357px;top:718px">新榜有数 · 新抖</div>
<div class="wm" style="left:-43px;top:718px">新榜有数 · 新抖</div>
<div class="wm" style="left:757px;top:718px">新榜有数 · 新抖</div>
<div class="wm" style="left:1157px;top:718px">新榜有数 · 新抖</div>

<!-- popup -->
<svg class="a" style="left:963px;top:294px" width="13" height="7"><path d="M0 7 L6.5 0.5 L13 7 Z" fill="#58575c"/></svg>
<div class="a" style="left:774px;top:300px;width:392px;height:158px;background:#58575c;border-radius:2px;box-shadow:0 2px 8px rgba(0,0,0,0.25)"></div>
<div class="a" style="left:794px;top:312px;font-size:10.7px;line-height:14px;font-weight:bold;color:#f2f2f2">达人视频服务预估报价</div>
<div class="a" style="left:774px;top:333.5px;width:392px;height:1px;background:#706f74"></div>
<div class="a" style="left:794px;top:346px;font-size:10.5px;line-height:13px;font-weight:bold;color:#c4c4c6">1-20s</div>
<div class="a" style="left:918px;top:346px;font-size:10.5px;line-height:13px;font-weight:bold;color:#c4c4c6">21-60s</div>
<div class="a" style="left:1042px;top:346px;font-size:10.5px;line-height:13px;font-weight:bold;color:#c4c4c6">60s+</div>
<div class="a" style="left:794px;top:369px;font-size:13px;line-height:16px;font-weight:bold;color:#f6f6f6">¥<span style="margin-left:1.5px">10</span></div>
<div class="a" style="left:918px;top:369px;font-size:13px;line-height:16px;font-weight:bold;color:#f6f6f6">¥<span style="margin-left:1.5px">10</span></div>
<div class="a" style="left:1042px;top:369px;font-size:13px;line-height:16px;font-weight:bold;color:#f6f6f6">¥<span style="margin-left:1.5px">10</span></div>
<div class="pp" style="left:793px;top:400px;width:90px"><b>低于90%</b>同级达人</div>
<div class="pp" style="left:917px;top:400px;width:90px"><b>低于90%</b>同级达人</div>
<div class="pp" style="left:1042px;top:400px;width:91px"><b>低于90%</b>同级达人</div>
<div class="a" style="left:794px;top:436.5px;font-size:9.5px;letter-spacing:-0.35px;line-height:12px;color:#ff2d2d">* 报价基于账号数据估算，请勿直接作为投放或投资建议。</div>

</body></html>
